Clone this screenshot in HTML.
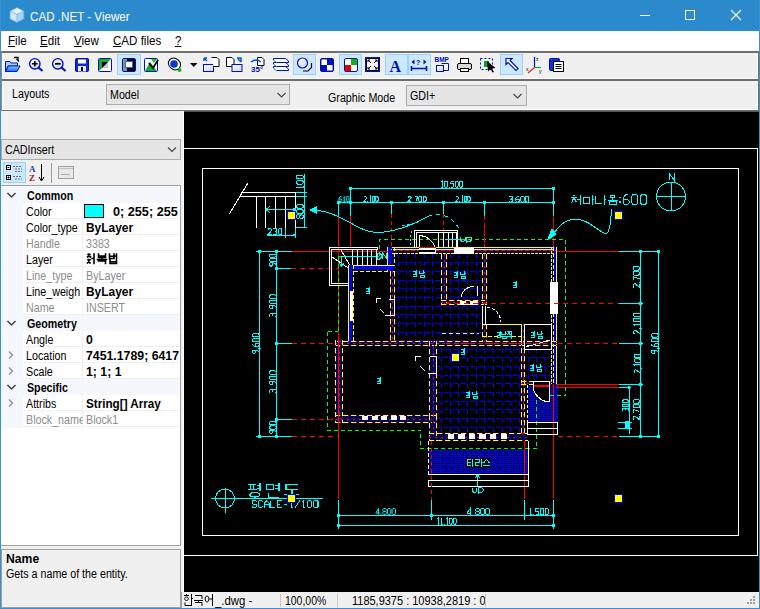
<!DOCTYPE html>
<html><head><meta charset="utf-8">
<style>
*{margin:0;padding:0;box-sizing:border-box}
html,body{width:760px;height:609px;overflow:hidden;background:#f0f0f0;font-family:"Liberation Sans",sans-serif;font-size:12px;color:#000}
.a{position:absolute}
.t{position:absolute;white-space:nowrap;transform-origin:0 0;line-height:14px}
.n{transform:scaleX(.87)}
.b{font-weight:bold}
.g{color:#8d8d8d}
svg{position:absolute;overflow:visible}
.sel{position:absolute;background:#cce8ff;border:1px solid #99d1ff}
.row{position:absolute;left:23px;width:157px;height:16px;border-bottom:1px solid #f0f0f0;background:#fff}
.row .v{position:absolute;left:59px;top:0;width:1px;height:16px;background:#f0f0f0}
.cat{position:absolute;left:1px;width:179px;height:16px;background:#f4f7fc}
</style></head><body>
<!-- title bar -->
<div class="a" style="left:0;top:0;width:760px;height:31px;background:#2b8acb"></div>
<svg style="left:0;top:0" width="40" height="31">
  <path d="M17 7.5 L24 11 L24 19 L17 22.5 L10 19 L10 11 Z" fill="#a9d3f7" stroke="#4f9fe3" stroke-width="1"/>
  <path d="M10.5 11.2 L17 14.5 L23.5 11.2 L17 8 Z" fill="#e4f2fd"/>
  <path d="M10.5 11.5 L17 14.7 L17 22 L10.5 18.8Z" fill="#cfe7fb"/>
  <path d="M10 11 L17 14.5 L24 11 M17 14.5 L17 22.5" fill="none" stroke="#6fb3ea" stroke-width="0.8"/>
</svg>
<div class="t" style="left:30px;top:10px;color:#fff;font-size:12.5px"><span style="display:inline-block;transform:scaleX(.93);transform-origin:0 0">CAD .NET - Viewer</span></div>
<svg style="left:0;top:0" width="760" height="31">
  <line x1="640" y1="15.5" x2="650" y2="15.5" stroke="#fff" stroke-width="1"/>
  <rect x="685.5" y="10.5" width="9" height="9" fill="none" stroke="#fff" stroke-width="1"/>
  <path d="M731 10 L741 20 M741 10 L731 20" stroke="#fff" stroke-width="1.1"/>
</svg>
<!-- menu -->
<div class="a" style="left:1px;top:31px;width:758px;height:20px;background:#fff"></div>
<div class="t" style="left:8px;top:34px;font-size:12.3px"><span style="display:inline-block;transform:scaleX(.94);transform-origin:0 0"><u>F</u>ile</span></div>
<div class="t" style="left:40px;top:34px;font-size:12.3px"><span style="display:inline-block;transform:scaleX(.94);transform-origin:0 0"><u>E</u>dit</span></div>
<div class="t" style="left:74px;top:34px;font-size:12.3px"><span style="display:inline-block;transform:scaleX(.94);transform-origin:0 0"><u>V</u>iew</span></div>
<div class="t" style="left:113px;top:34px;font-size:12.3px"><span style="display:inline-block;transform:scaleX(.94);transform-origin:0 0"><u>C</u>AD files</span></div>
<div class="t" style="left:175px;top:34px;font-size:12.3px"><span style="display:inline-block;transform:scaleX(.94);transform-origin:0 0"><u>?</u></span></div>
<!-- toolbar -->
<div class="a" style="left:1px;top:51px;width:758px;height:2px;background:#6e6e6e"></div>
<div class="a" style="left:757px;top:53px;width:1px;height:26px;background:#fff"></div>
<div class="a" style="left:758px;top:51px;width:1px;height:60px;background:#6e6e6e"></div>
<div class="a" style="left:1px;top:78px;width:757px;height:1px;background:#fff"></div>
<div class="a" style="left:1px;top:79px;width:758px;height:2px;background:#6e6e6e"></div>
<div class="a" style="left:757px;top:81px;width:1px;height:29px;background:#fff"></div>
<div class="a" style="left:1px;top:109px;width:757px;height:1px;background:#fff"></div>
<div class="a" style="left:1px;top:110px;width:758px;height:1px;background:#6e6e6e"></div>
<div class="a" style="left:1px;top:51px;width:1px;height:60px;background:#8a8a8a"></div>
<div class="a" style="left:2px;top:53px;width:1px;height:25px;background:#fff"></div>
<div class="a" style="left:2px;top:81px;width:1px;height:28px;background:#fff"></div>
<!-- toolbar buttons (selected) -->
<div class="sel" style="left:117px;top:54px;width:24px;height:21px"></div>
<div class="sel" style="left:293px;top:54px;width:23px;height:21px"></div>
<div class="sel" style="left:339px;top:54px;width:23px;height:21px"></div>
<div class="sel" style="left:385px;top:54px;width:23px;height:21px"></div>
<div class="sel" style="left:408px;top:54px;width:23px;height:21px"></div>
<div class="sel" style="left:500px;top:54px;width:23px;height:21px"></div>
<svg style="left:0;top:0" width="760" height="80">
<defs>
 <linearGradient id="gb" x1="0" y1="0" x2="0" y2="1"><stop offset="0" stop-color="#8ec9ff"/><stop offset="1" stop-color="#0a6ee8"/></linearGradient>
 <linearGradient id="gw" x1="0" y1="0" x2="1" y2="1"><stop offset="0" stop-color="#fff"/><stop offset="1" stop-color="#c8d4f0"/></linearGradient>
</defs>
<!-- 1 open folder -->
<path d="M5.5 61.5 L10 61.5 L11 63 L17.5 63 L17.5 66 L8 66 L5.5 71.5 Z" fill="#9cd0ff" stroke="#0018c8" stroke-width="1"/>
<path d="M5.5 71.5 L8.5 66 L20 66 L17 71.5 Z" fill="url(#gb)" stroke="#0018c8" stroke-width="1"/>
<path d="M14 57.5 L18 57.5 L18 60.5 M16.5 59 L19 61.5" stroke="#000" stroke-width="1.3" fill="none"/>
<!-- 2 zoom in -->
<circle cx="34.8" cy="63.8" r="5.2" fill="url(#gw)" stroke="#0010c0" stroke-width="1.4"/>
<path d="M38.5 67.5 L42.5 71" stroke="#0010c0" stroke-width="2.2"/>
<path d="M32 63.8 H37.6 M34.8 61 V66.6" stroke="#000" stroke-width="1.6"/>
<!-- 3 zoom out -->
<circle cx="57.8" cy="63.8" r="5.2" fill="url(#gw)" stroke="#0010c0" stroke-width="1.4"/>
<path d="M61.5 67.5 L65.5 71" stroke="#0010c0" stroke-width="2.2"/>
<path d="M55 63.8 H60.6" stroke="#000" stroke-width="1.8"/>
<!-- 4 save -->
<rect x="75.5" y="58.5" width="13" height="13" rx="1" fill="#1028d8" stroke="#0010a0"/>
<rect x="78" y="59.5" width="8" height="4" fill="#fff"/>
<rect x="78" y="66" width="8" height="5.5" fill="#e6eaf4"/>
<rect x="81" y="67" width="2" height="4" fill="#000"/>
<!-- 5 zoom extents -->
<rect x="98.5" y="58.5" width="13" height="13" rx="1" fill="#fff" stroke="#0010b8"/>
<path d="M99 59 L111 59 L99 71 Z" fill="#10b020"/>
<rect x="102" y="62" width="6" height="6" fill="#b8c8e8"/>
<path d="M102 62 L108 62 L102 68Z" fill="#000"/>
<!-- 6 selected icon -->
<rect x="122.5" y="58.5" width="13" height="13" rx="1.5" fill="#000" stroke="#0010b0"/>
<rect x="123" y="59" width="4" height="12" fill="#909090"/>
<rect x="125.5" y="61.5" width="7" height="6" fill="#fff" stroke="#2060ff"/>
<!-- 7 green check -->
<rect x="144.5" y="58.5" width="13" height="13" rx="1" fill="#fff" stroke="#0010c0"/>
<path d="M145 71 L150 62 L157 71 Z" fill="#10b020"/>
<path d="M149 63 L153 68 L158 60" stroke="#000" stroke-width="1.8" fill="none"/>
<path d="M151 59 L157 59 L154 63Z" fill="#20c030"/>
<!-- 8 globe -->
<ellipse cx="174.5" cy="64" rx="6.5" ry="5.5" transform="rotate(40 174.5 64)" fill="none" stroke="#000" stroke-width="1"/>
<circle cx="174" cy="64" r="3.8" fill="#1038d0"/>
<circle cx="179.5" cy="70" r="2" fill="#18b020"/>
<!-- 9 dropdown arrow -->
<path d="M190 63 L197.5 63 L193.75 67 Z" fill="#000"/>
<!-- 10 -->
<rect x="203.5" y="64.5" width="10" height="7" fill="url(#gw)" stroke="#0010c0"/>
<path d="M211.5 57.5 H217 L219 59.5 V66.5 H213.5" fill="#fff" stroke="#000"/>
<path d="M204 58 L207 61 M204 58 H207 M204 58 V61" stroke="#0050e0" stroke-width="1.4" fill="none"/>
<!-- 11 -->
<path d="M226.5 57.5 H232 L234 59.5 V66.5 H226.5Z" fill="#fff" stroke="#000"/>
<rect x="232" y="64.5" width="10" height="7" fill="url(#gw)" stroke="#0010c0"/>
<path d="M237 58 H241 V62 M238 59 L241 62" stroke="#0050e0" stroke-width="1.4" fill="none"/>
<!-- 12 35 -->
<path d="M257.5 57.5 H262 L264 59.5 V65.5 H257.5Z" fill="#fff" stroke="#000"/>
<path d="M251 62 Q256 58 261 62" stroke="#0050e0" stroke-width="1.4" fill="none"/>
<text x="251" y="71.5" font-size="8" font-weight="bold" fill="#0010a0" font-family="Liberation Sans">35°</text>
<!-- 13 layers -->
<path d="M273.5 66.5 L285.5 66.5 L288.5 69 L288.5 70.5 L276.5 70.5 L273.5 68 Z" fill="#fff" stroke="#0010c0" stroke-width="1"/>
<path d="M273.5 62.5 L285.5 62.5 L288.5 65 L288.5 66.5 L276.5 66.5 L273.5 64 Z" fill="#fff" stroke="#0010c0" stroke-width="1"/>
<path d="M273.5 58.5 L285.5 58.5 L288.5 61 L288.5 62.5 L276.5 62.5 L273.5 60 Z" fill="#fff" stroke="#0010c0" stroke-width="1"/>
<path d="M274 60 L276.5 62.5 M274 64 L276.5 66.5 M274 68 L276.5 70.5" stroke="#30c0ff" stroke-width="1"/>
<!-- 14 circle -->
<circle cx="302.5" cy="63" r="5" fill="url(#gw)" stroke="#0010c0" stroke-width="1.2"/>
<path d="M311.5 63 V67.5 L308 71 H303" stroke="#000" stroke-width="1.2" fill="none"/>
<!-- 15 checker -->
<rect x="320.5" y="58.5" width="13" height="13" rx="1.5" fill="#0010c0" stroke="#0010a0"/>
<rect x="321.5" y="59.5" width="5.5" height="5.5" fill="#fff"/>
<rect x="327" y="65" width="5.5" height="5.5" fill="#fff"/>
<!-- 16 rgb -->
<rect x="344.5" y="58.5" width="13" height="13" rx="1.5" fill="#fff" stroke="#0010b0"/>
<rect x="351" y="59" width="6" height="6" fill="#10b020"/>
<rect x="345" y="65" width="6" height="6" fill="#e00000"/>
<!-- 17 fullscreen -->
<rect x="365.5" y="57.5" width="14" height="14" fill="#fff" stroke="#0010c0"/>
<rect x="366.5" y="58.5" width="12" height="12" fill="#f2f2f2" stroke="#000"/>
<path d="M368 60 L371 63 M368 60 V62 M368 60 H370 M377 60 L374 63 M377 60 V62 M377 60 H375 M368 69 L371 66 M368 69 V67 M368 69 H370 M377 69 L374 66 M377 69 V67 M377 69 H375" stroke="#000" stroke-width="1"/>
<!-- 18 A -->
<text x="389.5" y="71.5" font-size="16" font-weight="bold" fill="#0010b0" font-family="Liberation Serif">A</text>
<!-- 19 dim -->
<path d="M411.5 68.5 H426.5 M411.5 66 V71 M426.5 66 V71" stroke="#0010b0" stroke-width="1.6"/>
<path d="M411.5 62 L414.5 59.5 V64.5Z M426.5 62 L423.5 59.5 V64.5Z" fill="#0010b0"/>
<text x="416" y="65" font-size="7" font-weight="bold" fill="#0010b0" font-family="Liberation Sans">?</text>
<!-- 20 BMP -->
<text x="434.5" y="62" font-size="6.5" font-weight="bold" fill="#0010c0" font-family="Liberation Sans">BMP</text>
<rect x="436.5" y="65.5" width="7" height="6" fill="url(#gw)" stroke="#0010c0"/>
<path d="M441.5 63.5 H448.5 V70.5 H444" stroke="#0010c0" fill="none"/>
<!-- 21 printer -->
<rect x="457.5" y="63.5" width="14" height="6" rx="1.5" fill="#d8d8d8" stroke="#000"/>
<rect x="460.5" y="58.5" width="8" height="5" fill="#fff" stroke="#000"/>
<rect x="460.5" y="68.5" width="8" height="3" fill="#fff" stroke="#000"/>
<!-- 22 select window -->
<path d="M480.5 58.5 H492.5 V69.5 H480.5 Z" fill="none" stroke="#0010c0" stroke-dasharray="2 2"/>
<rect x="484" y="61" width="5" height="6" fill="#10a020"/>
<path d="M487 61 L495.5 68 L492 68.5 L494 72 L492.5 72.5 L490.5 69 L488 71.5Z" fill="#000"/>
<!-- 23 arrow -->
<path d="M506 58.5 H512 L510 60.5 L518 68.5 L516 70.5 L508 62.5 L506 64.5 Z" fill="#fff" stroke="#0010c0" stroke-width="1.2"/>
<!-- 24 axes -->
<path d="M534.5 57 V67.5" stroke="#0010c0" stroke-width="1.2"/>
<path d="M534.5 67.5 H541" stroke="#10b020" stroke-width="1.2"/>
<path d="M534.5 67.5 L528 73" stroke="#e02020" stroke-width="1.2"/>
<text x="536" y="61" font-size="5" fill="#000" font-family="Liberation Sans">z</text>
<text x="526" y="71" font-size="5" fill="#000" font-family="Liberation Sans">x</text>
<text x="539" y="73" font-size="5" fill="#000" font-family="Liberation Sans">y</text>
<!-- 25 clipboard -->
<rect x="549.5" y="58.5" width="10" height="12" rx="1" fill="#1030d8" stroke="#0010a0"/>
<rect x="553.5" y="61.5" width="10" height="10" fill="#fff" stroke="#000"/>
<path d="M555.5 64.5 H561.5 M555.5 66.5 H561.5 M555.5 68.5 H561.5" stroke="#000"/>
</svg>
<!-- layouts bar -->
<div class="t n" style="left:12px;top:87px;font-size:12.3px">Layouts</div>
<div class="a" style="left:106px;top:84px;width:184px;height:21px;background:#e5e5e5;border:1px solid #adadad"></div>
<div class="t n" style="left:110px;top:88px;font-size:12.3px">Model</div>
<div class="t n" style="left:328px;top:91px;font-size:12.3px">Graphic Mode</div>
<div class="a" style="left:406px;top:85px;width:121px;height:21px;background:#e5e5e5;border:1px solid #adadad"></div>
<div class="t n" style="left:410px;top:89px;font-size:12.3px">GDI+</div>
<svg style="left:0;top:0" width="760" height="200">
 <path d="M277.5 93 L281.5 97 L285.5 93" stroke="#444" stroke-width="1.1" fill="none"/>
 <path d="M513.5 94 L517.5 98 L521.5 94" stroke="#444" stroke-width="1.1" fill="none"/>
</svg>
<!-- left splitter -->
<div class="a" style="left:183px;top:111px;width:1px;height:481px;background:#fff"></div>
<!-- CADInsert combo -->
<div class="a" style="left:1px;top:139px;width:180px;height:21px;background:#e5e5e5;border:1px solid #adadad"></div>
<div class="t n" style="left:5px;top:143px;font-size:12.3px">CADInsert</div>
<!-- pg toolbar -->
<div class="sel" style="left:3px;top:162px;width:23px;height:21px"></div>
<div class="a" style="left:51px;top:163px;width:1px;height:20px;background:#9a9a9a"></div>
<svg style="left:0;top:0" width="200" height="200">
 <path d="M168 147.5 L172 151.5 L176 147.5" stroke="#444" stroke-width="1.1" fill="none"/>
 <rect x="6.5" y="165.5" width="4" height="4" fill="#fff" stroke="#000"/>
 <rect x="6.5" y="175.5" width="4" height="4" fill="#fff" stroke="#000"/>
 <path d="M7.5 167.5 H9.5 M7.5 177.5 H9.5 M8.5 176.5 V178.5" stroke="#000"/>
 <path d="M13 166.5 H22 M15 169 H22 M15 171.5 H22 M13 176.5 H22 M15 179 H22" stroke="#6a6a8a" stroke-width="1" stroke-dasharray="2 1"/>
 <text x="29" y="172" font-size="9" font-weight="bold" fill="#2040b0" font-family="Liberation Serif">A</text>
 <text x="29" y="181" font-size="9" font-weight="bold" fill="#a02020" font-family="Liberation Serif">Z</text>
 <path d="M41.5 164 V180 M39 177 L41.5 181 L44 177" stroke="#000" stroke-width="1" fill="none"/>
 <rect x="58.5" y="166.5" width="15" height="12" fill="#e8e8e8" stroke="#a0a0a0"/>
 <path d="M59 168.5 H73" stroke="#c0c0c0"/>
 <path d="M61 174.5 H70" stroke="#b0b0b0"/>
</svg>
<!-- property grid -->
<div class="a" style="left:0px;top:185px;width:181px;height:361px;background:#fff;border:1px solid #a0a0a0"></div>
<div class="a" style="left:1px;top:186px;width:22px;height:242px;background:#f4f7fc"></div>
<div class="cat" style="top:187px"></div>
<div class="t b" style="left:27px;top:189px;font-size:12px"><span style="display:inline-block;transform:scaleX(.89);transform-origin:0 0">Common</span></div>
<svg style="left:0;top:187px" width="20" height="16"><path d="M7.5 6 L11.5 10 L15.5 6" stroke="#404040" stroke-width="1.5" fill="none"/></svg>
<div class="row" style="top:203px"><div class="v"></div></div>
<div class="t n " style="left:26px;top:205px;font-size:12.3px;width:65px;overflow:hidden">Color</div>
<div class="a" style="left:84px;top:204px;width:20px;height:14px;background:#0ff;border:1px solid #000"></div>
<div class="t b" style="left:113px;top:205px;font-size:12.3px;width:67px;overflow:hidden"><span style="display:inline-block;transform:scaleX(1.03);transform-origin:0 0">0; 255; 255</span></div>
<div class="row" style="top:219px"><div class="v"></div></div>
<div class="t n " style="left:26px;top:221px;font-size:12.3px;width:65px;overflow:hidden">Color_type</div>
<div class="t b" style="left:86px;top:221px;font-size:12.3px;width:94px;overflow:hidden"><span style="display:inline-block;transform:scaleX(.97);transform-origin:0 0">ByLayer</span></div>
<div class="row" style="top:235px"><div class="v"></div></div>
<div class="t n g" style="left:26px;top:237px;font-size:12.3px;width:65px;overflow:hidden">Handle</div>
<div class="t g" style="left:86px;top:237px;font-size:12.3px;width:94px;overflow:hidden"><span style="display:inline-block;transform:scaleX(.87);transform-origin:0 0">3383</span></div>
<div class="row" style="top:251px"><div class="v"></div></div>
<div class="t n " style="left:26px;top:253px;font-size:12.3px;width:65px;overflow:hidden">Layer</div>
<svg style="left:86px;top:251px" width="40" height="16"><g stroke="#000" stroke-width="1.6" fill="none" stroke-linecap="square">
<path d="M2 3.5 H4 M3 3 V4.5 M1.5 6 L3 5 L4.5 6 M2 8.5 L4 12 M4 8.5 L1.5 12 M8 3 V12.5 M6 7.5 H8"/>
<path d="M12.5 3 V6.5 H19.5 V3 M12.5 5 H19.5 M16 6.5 V8 M11.5 8.5 H20.5 M12.5 10 H19.5 V12.5"/>
<path d="M23.5 3 V7.5 H28 V3 M23.5 5.2 H28 M28 5 H30 M30.5 3 V8 M24 9 V12.5 H30.5 V9 M24 10.7 H30.5"/>
</g></svg>
<div class="row" style="top:267px"><div class="v"></div></div>
<div class="t n g" style="left:26px;top:269px;font-size:12.3px;width:65px;overflow:hidden">Line_type</div>
<div class="t g" style="left:86px;top:269px;font-size:12.3px;width:94px;overflow:hidden"><span style="display:inline-block;transform:scaleX(.87);transform-origin:0 0">ByLayer</span></div>
<div class="row" style="top:283px"><div class="v"></div></div>
<div class="t n " style="left:26px;top:285px;font-size:12.3px;width:65px;overflow:hidden">Line_weigh</div>
<div class="t b" style="left:86px;top:285px;font-size:12.3px;width:94px;overflow:hidden"><span style="display:inline-block;transform:scaleX(.97);transform-origin:0 0">ByLayer</span></div>
<div class="row" style="top:299px"><div class="v"></div></div>
<div class="t n g" style="left:26px;top:301px;font-size:12.3px;width:65px;overflow:hidden">Name</div>
<div class="t g" style="left:86px;top:301px;font-size:12.3px;width:94px;overflow:hidden"><span style="display:inline-block;transform:scaleX(.87);transform-origin:0 0">INSERT</span></div>
<div class="cat" style="top:315px"></div>
<div class="t b" style="left:27px;top:317px;font-size:12px"><span style="display:inline-block;transform:scaleX(.89);transform-origin:0 0">Geometry</span></div>
<svg style="left:0;top:315px" width="20" height="16"><path d="M7.5 6 L11.5 10 L15.5 6" stroke="#404040" stroke-width="1.5" fill="none"/></svg>
<div class="row" style="top:331px"><div class="v"></div></div>
<div class="t n " style="left:26px;top:333px;font-size:12.3px;width:65px;overflow:hidden">Angle</div>
<div class="t b" style="left:86px;top:333px;font-size:12.3px;width:94px;overflow:hidden"><span style="display:inline-block;transform:scaleX(1.0);transform-origin:0 0">0</span></div>
<div class="row" style="top:347px"><div class="v"></div></div>
<div class="t n " style="left:26px;top:349px;font-size:12.3px;width:65px;overflow:hidden">Location</div>
<svg style="left:0;top:347px" width="20" height="16"><path d="M9 4.5 L12.5 8 L9 11.5" stroke="#909090" stroke-width="1.3" fill="none"/></svg>
<div class="t b" style="left:86px;top:349px;font-size:12.3px;width:94px;overflow:hidden"><span style="display:inline-block;transform:scaleX(1.0);transform-origin:0 0">7451.1789; 6417</span></div>
<div class="row" style="top:363px"><div class="v"></div></div>
<div class="t n " style="left:26px;top:365px;font-size:12.3px;width:65px;overflow:hidden">Scale</div>
<svg style="left:0;top:363px" width="20" height="16"><path d="M9 4.5 L12.5 8 L9 11.5" stroke="#909090" stroke-width="1.3" fill="none"/></svg>
<div class="t b" style="left:86px;top:365px;font-size:12.3px;width:94px;overflow:hidden"><span style="display:inline-block;transform:scaleX(1.0);transform-origin:0 0">1; 1; 1</span></div>
<div class="cat" style="top:379px"></div>
<div class="t b" style="left:27px;top:381px;font-size:12px"><span style="display:inline-block;transform:scaleX(.89);transform-origin:0 0">Specific</span></div>
<svg style="left:0;top:379px" width="20" height="16"><path d="M7.5 6 L11.5 10 L15.5 6" stroke="#404040" stroke-width="1.5" fill="none"/></svg>
<div class="row" style="top:395px"><div class="v"></div></div>
<div class="t n " style="left:26px;top:397px;font-size:12.3px;width:65px;overflow:hidden">Attribs</div>
<svg style="left:0;top:395px" width="20" height="16"><path d="M9 4.5 L12.5 8 L9 11.5" stroke="#909090" stroke-width="1.3" fill="none"/></svg>
<div class="t b" style="left:86px;top:397px;font-size:12.3px;width:94px;overflow:hidden"><span style="display:inline-block;transform:scaleX(.95);transform-origin:0 0">String[] Array</span></div>
<div class="row" style="top:411px"><div class="v"></div></div>
<div class="t n g" style="left:26px;top:413px;font-size:12.3px;width:65px;overflow:hidden">Block_name</div>
<div class="t g" style="left:86px;top:413px;font-size:12.3px;width:94px;overflow:hidden"><span style="display:inline-block;transform:scaleX(.87);transform-origin:0 0">Block1</span></div>
<!-- canvas -->
<div class="a" style="left:184px;top:111px;width:575px;height:481px;background:#000;border-top:1px solid #555"></div>
<svg style="left:0;top:0" width="760" height="609">
<defs>
<clipPath id="cv"><rect x="184" y="112" width="575" height="480"/></clipPath>
<pattern id="tile" patternUnits="userSpaceOnUse" x="394.05" y="257.95" width="17.2" height="17.2">
 <path d="M4.3 1 V4.3 M1.3 4.3 H7.3 M15.899999999999999 1.5 H12.899999999999999 V7.1 H15.899999999999999 M4.3 9.9 V15.899999999999999 M1.3 12.899999999999999 H7.3 M9.9 10.1 H12.899999999999999 V15.7 H9.9" stroke="#0000ff" stroke-width="1" fill="none" shape-rendering="crispEdges"/>
</pattern>
<pattern id="brick" patternUnits="userSpaceOnUse" x="0" y="0" width="6" height="4">
 <rect width="6" height="4" fill="#0000ff"/>
 <rect x="0" y="1" width="5" height="1" fill="#000"/>
 <rect x="3" y="3" width="3" height="1" fill="#000"/><rect x="0" y="3" width="2" height="1" fill="#000"/>
</pattern>
<pattern id="hatch" patternUnits="userSpaceOnUse" x="0" y="0" width="3" height="3">
 <rect x="0" y="2" width="1" height="1" fill="#0000ff"/><rect x="1" y="1" width="1" height="1" fill="#0000ff"/><rect x="2" y="0" width="1" height="1" fill="#0000ff"/>
</pattern>
<pattern id="wallp" patternUnits="userSpaceOnUse" x="0" y="0" width="3" height="3">
 <rect width="3" height="3" fill="#0000ff"/>
 <rect x="0" y="0" width="1" height="1" fill="#000"/><rect x="1.5" y="1.5" width="1" height="1" fill="#000"/>
</pattern>
</defs>
<g clip-path="url(#cv)" shape-rendering="crispEdges">
<path d="M150 148.5 H757.5 V555.5 H150" stroke="#ffffff" stroke-width="1" fill="none"/>
<rect x="202.5" y="168.5" width="536" height="367" fill="none" stroke="#ffffff" stroke-width="1"/>
<path d="M394 262.5 H442 M394 271.5 H442 M394 280.5 H442 M394 288.5 H442 M394 297.5 H442 M394 306.5 H442 M394 314.5 H442 M394 323.5 H442 M394 332.5 H442 M394 340.5 H442" stroke="#0000ff" stroke-width="1" fill="none" stroke-dasharray="5 3.7" stroke-dashoffset="2.40"/>
<path d="M398.5 254 V341 M406.5 254 V341 M415.5 254 V341 M424.5 254 V341 M432.5 254 V341 M441.5 254 V341" stroke="#0000ff" stroke-width="1" fill="none" stroke-dasharray="5 3.7" stroke-dashoffset="1.40"/>
<path d="M446 262.5 H482 M446 271.5 H482 M446 280.5 H482 M446 288.5 H482 M446 297.5 H482" stroke="#0000ff" stroke-width="1" fill="none" stroke-dasharray="5 3.7" stroke-dashoffset="2.20"/>
<path d="M450.5 254 V301 M458.5 254 V301 M467.5 254 V301 M476.5 254 V301" stroke="#0000ff" stroke-width="1" fill="none" stroke-dasharray="5 3.7" stroke-dashoffset="1.40"/>
<path d="M442 306.5 H482 M442 314.5 H482 M442 323.5 H482 M442 332.5 H482 M442 340.5 H482" stroke="#0000ff" stroke-width="1" fill="none" stroke-dasharray="5 3.7" stroke-dashoffset="6.90"/>
<path d="M450.5 304 V341 M458.5 304 V341 M467.5 304 V341 M476.5 304 V341" stroke="#0000ff" stroke-width="1" fill="none" stroke-dasharray="5 3.7" stroke-dashoffset="7.90"/>
<path d="M436 349.5 H523 M436 357.5 H523 M436 366.5 H523 M436 375.5 H523 M436 383.5 H523 M436 392.5 H523 M436 401.5 H523 M436 409.5 H523 M436 418.5 H523 M436 427.5 H523" stroke="#0000ff" stroke-width="1" fill="none" stroke-dasharray="5 3.7" stroke-dashoffset="0.90"/>
<path d="M441.5 345 V433 M450.5 345 V433 M458.5 345 V433 M467.5 345 V433 M476.5 345 V433 M484.5 345 V433 M493.5 345 V433 M502.5 345 V433 M510.5 345 V433 M519.5 345 V433" stroke="#0000ff" stroke-width="1" fill="none" stroke-dasharray="5 3.7" stroke-dashoffset="5.40"/>
<path d="M523 357.5 H552 M523 366.5 H552 M523 375.5 H552" stroke="#0000ff" stroke-width="1" fill="none" stroke-dasharray="5 3.7" stroke-dashoffset="0.90"/>
<path d="M528.5 349 V382 M536.5 349 V382 M545.5 349 V382" stroke="#0000ff" stroke-width="1" fill="none" stroke-dasharray="5 3.7" stroke-dashoffset="0.70"/>
<rect x="428.5" y="448.5" width="100" height="26" fill="url(#brick)" stroke="none" stroke-width="1"/>
<rect x="527.5" y="385" width="30" height="37" fill="url(#brick)" stroke="none" stroke-width="1"/>
<rect x="387" y="250.0" width="170" height="3.0" fill="url(#hatch)" stroke="none" stroke-width="1"/>
<line x1="387" y1="247.5" x2="557" y2="247.5" stroke="#ffff00" stroke-width="1"/>
<line x1="387" y1="248.5" x2="557" y2="248.5" stroke="#0000ff" stroke-width="1" stroke-dasharray="1 1"/>
<line x1="387" y1="249.5" x2="557" y2="249.5" stroke="#ffff00" stroke-width="1"/>
<line x1="387" y1="250.5" x2="557" y2="250.5" stroke="#ff0000" stroke-width="1" stroke-dasharray="4 2"/>
<line x1="387" y1="253.5" x2="557" y2="253.5" stroke="#ffff00" stroke-width="1" stroke-dasharray="3 1"/>
<rect x="388" y="247" width="6" height="24" fill="url(#hatch)" stroke="none" stroke-width="1"/>
<rect x="388" y="247" width="3" height="24" fill="#0000ff" stroke="none" stroke-width="1"/>
<line x1="387.5" y1="247" x2="387.5" y2="271" stroke="#ffff00" stroke-width="1"/>
<line x1="394.5" y1="247" x2="394.5" y2="271" stroke="#ffff00" stroke-width="1" stroke-dasharray="4 2"/>
<rect x="348" y="266" width="47" height="5" fill="url(#hatch)" stroke="none" stroke-width="1"/>
<rect x="348" y="266" width="47" height="3" fill="#0000ff" stroke="none" stroke-width="1"/>
<line x1="348" y1="265.5" x2="395" y2="265.5" stroke="#ffff00" stroke-width="1"/>
<line x1="348" y1="271.5" x2="395" y2="271.5" stroke="#ffff00" stroke-width="1" stroke-dasharray="4 2"/>
<rect x="349" y="265" width="4" height="77" fill="url(#hatch)" stroke="none" stroke-width="1"/>
<rect x="349" y="265" width="3" height="77" fill="#0000ff" stroke="none" stroke-width="1"/>
<line x1="348.5" y1="265" x2="348.5" y2="342" stroke="#ffff00" stroke-width="1"/>
<line x1="353.5" y1="265" x2="353.5" y2="342" stroke="#ffff00" stroke-width="1" stroke-dasharray="4 2"/>
<rect x="551.0" y="247" width="2.0" height="137" fill="url(#hatch)" stroke="none" stroke-width="1"/>
<line x1="556.5" y1="247" x2="556.5" y2="384" stroke="#ffff00" stroke-width="1"/>
<line x1="555.5" y1="247" x2="555.5" y2="384" stroke="#0000ff" stroke-width="1" stroke-dasharray="1 1"/>
<line x1="554.5" y1="247" x2="554.5" y2="384" stroke="#0000ff" stroke-width="1"/>
<line x1="553.5" y1="247" x2="553.5" y2="384" stroke="#ffff00" stroke-width="1" stroke-dasharray="4 2"/>
<line x1="551.5" y1="247" x2="551.5" y2="384" stroke="#ffff00" stroke-width="1" stroke-dasharray="3 1"/>
<rect x="335" y="342" width="222" height="3" fill="url(#hatch)" stroke="none" stroke-width="1"/>
<line x1="335" y1="341.5" x2="557" y2="341.5" stroke="#ff0000" stroke-width="1" stroke-dasharray="3 5" stroke-dashoffset="5"/>
<line x1="335" y1="345.5" x2="557" y2="345.5" stroke="#ff0000" stroke-width="1" stroke-dasharray="3 5" stroke-dashoffset="5"/>
<line x1="335" y1="341.5" x2="557" y2="341.5" stroke="#ffff00" stroke-width="1" stroke-dasharray="5 3"/>
<line x1="335" y1="345.5" x2="557" y2="345.5" stroke="#ffff00" stroke-width="1" stroke-dasharray="5 3"/>
<line x1="335" y1="343.5" x2="557" y2="343.5" stroke="#ff0000" stroke-width="1" stroke-dasharray="2 4"/>
<rect x="336" y="340" width="6" height="83" fill="url(#hatch)" stroke="none" stroke-width="1"/>
<line x1="335.5" y1="340" x2="335.5" y2="423" stroke="#ff0000" stroke-width="1" stroke-dasharray="3 5" stroke-dashoffset="5"/>
<line x1="342.5" y1="340" x2="342.5" y2="423" stroke="#ff0000" stroke-width="1" stroke-dasharray="3 5" stroke-dashoffset="5"/>
<line x1="335.5" y1="340" x2="335.5" y2="423" stroke="#ffff00" stroke-width="1" stroke-dasharray="5 3"/>
<line x1="342.5" y1="340" x2="342.5" y2="423" stroke="#ffff00" stroke-width="1" stroke-dasharray="5 3"/>
<line x1="339.0" y1="340" x2="339.0" y2="423" stroke="#ff0000" stroke-width="1" stroke-dasharray="2 4"/>
<rect x="335" y="416" width="102" height="6" fill="url(#hatch)" stroke="none" stroke-width="1"/>
<line x1="335" y1="415.5" x2="437" y2="415.5" stroke="#ff0000" stroke-width="1" stroke-dasharray="3 5" stroke-dashoffset="5"/>
<line x1="335" y1="422.5" x2="437" y2="422.5" stroke="#ff0000" stroke-width="1" stroke-dasharray="3 5" stroke-dashoffset="5"/>
<line x1="335" y1="415.5" x2="437" y2="415.5" stroke="#ffff00" stroke-width="1" stroke-dasharray="5 3"/>
<line x1="335" y1="422.5" x2="437" y2="422.5" stroke="#ffff00" stroke-width="1" stroke-dasharray="5 3"/>
<line x1="335" y1="419.0" x2="437" y2="419.0" stroke="#ff0000" stroke-width="1" stroke-dasharray="2 4"/>
<rect x="430" y="341" width="6" height="74" fill="url(#hatch)" stroke="none" stroke-width="1"/>
<line x1="429.5" y1="341" x2="429.5" y2="415" stroke="#ff0000" stroke-width="1" stroke-dasharray="3 5" stroke-dashoffset="5"/>
<line x1="436.5" y1="341" x2="436.5" y2="415" stroke="#ff0000" stroke-width="1" stroke-dasharray="3 5" stroke-dashoffset="5"/>
<line x1="429.5" y1="341" x2="429.5" y2="415" stroke="#ffff00" stroke-width="1" stroke-dasharray="5 3"/>
<line x1="436.5" y1="341" x2="436.5" y2="415" stroke="#ffff00" stroke-width="1" stroke-dasharray="5 3"/>
<line x1="433.0" y1="341" x2="433.0" y2="415" stroke="#ff0000" stroke-width="1" stroke-dasharray="2 4"/>
<rect x="430" y="415" width="6" height="26" fill="url(#hatch)" stroke="none" stroke-width="1"/>
<line x1="429.5" y1="415" x2="429.5" y2="441" stroke="#ff0000" stroke-width="1" stroke-dasharray="3 5" stroke-dashoffset="5"/>
<line x1="436.5" y1="415" x2="436.5" y2="441" stroke="#ff0000" stroke-width="1" stroke-dasharray="3 5" stroke-dashoffset="5"/>
<line x1="429.5" y1="415" x2="429.5" y2="441" stroke="#ffff00" stroke-width="1" stroke-dasharray="5 3"/>
<line x1="436.5" y1="415" x2="436.5" y2="441" stroke="#ffff00" stroke-width="1" stroke-dasharray="5 3"/>
<line x1="433.0" y1="415" x2="433.0" y2="441" stroke="#ff0000" stroke-width="1" stroke-dasharray="2 4"/>
<rect x="429" y="434" width="99" height="6" fill="url(#hatch)" stroke="none" stroke-width="1"/>
<line x1="429" y1="433.5" x2="528" y2="433.5" stroke="#ff0000" stroke-width="1" stroke-dasharray="3 5" stroke-dashoffset="5"/>
<line x1="429" y1="440.5" x2="528" y2="440.5" stroke="#ff0000" stroke-width="1" stroke-dasharray="3 5" stroke-dashoffset="5"/>
<line x1="429" y1="433.5" x2="528" y2="433.5" stroke="#ffff00" stroke-width="1" stroke-dasharray="5 3"/>
<line x1="429" y1="440.5" x2="528" y2="440.5" stroke="#ffff00" stroke-width="1" stroke-dasharray="5 3"/>
<line x1="429" y1="437.0" x2="528" y2="437.0" stroke="#ff0000" stroke-width="1" stroke-dasharray="2 4"/>
<rect x="391" y="271" width="3" height="70" fill="url(#hatch)" stroke="none" stroke-width="1"/>
<line x1="390.5" y1="271" x2="390.5" y2="341" stroke="#ff0000" stroke-width="1" stroke-dasharray="3 5" stroke-dashoffset="5"/>
<line x1="394.5" y1="271" x2="394.5" y2="341" stroke="#ff0000" stroke-width="1" stroke-dasharray="3 5" stroke-dashoffset="5"/>
<line x1="390.5" y1="271" x2="390.5" y2="341" stroke="#ffff00" stroke-width="1" stroke-dasharray="5 3"/>
<line x1="394.5" y1="271" x2="394.5" y2="341" stroke="#ffff00" stroke-width="1" stroke-dasharray="5 3"/>
<line x1="392.5" y1="271" x2="392.5" y2="341" stroke="#ff0000" stroke-width="1" stroke-dasharray="2 4"/>
<rect x="442" y="254" width="4" height="51" fill="url(#hatch)" stroke="none" stroke-width="1"/>
<line x1="441.5" y1="254" x2="441.5" y2="305" stroke="#ff0000" stroke-width="1" stroke-dasharray="3 5" stroke-dashoffset="5"/>
<line x1="446.5" y1="254" x2="446.5" y2="305" stroke="#ff0000" stroke-width="1" stroke-dasharray="3 5" stroke-dashoffset="5"/>
<line x1="441.5" y1="254" x2="441.5" y2="305" stroke="#ffff00" stroke-width="1" stroke-dasharray="5 3"/>
<line x1="446.5" y1="254" x2="446.5" y2="305" stroke="#ffff00" stroke-width="1" stroke-dasharray="5 3"/>
<line x1="444.0" y1="254" x2="444.0" y2="305" stroke="#ff0000" stroke-width="1" stroke-dasharray="2 4"/>
<rect x="441" y="301" width="46" height="3" fill="url(#hatch)" stroke="none" stroke-width="1"/>
<line x1="441" y1="300.5" x2="487" y2="300.5" stroke="#ff0000" stroke-width="1" stroke-dasharray="3 5" stroke-dashoffset="5"/>
<line x1="441" y1="304.5" x2="487" y2="304.5" stroke="#ff0000" stroke-width="1" stroke-dasharray="3 5" stroke-dashoffset="5"/>
<line x1="441" y1="300.5" x2="487" y2="300.5" stroke="#ffff00" stroke-width="1" stroke-dasharray="5 3"/>
<line x1="441" y1="304.5" x2="487" y2="304.5" stroke="#ffff00" stroke-width="1" stroke-dasharray="5 3"/>
<line x1="441" y1="302.5" x2="487" y2="302.5" stroke="#ff0000" stroke-width="1" stroke-dasharray="2 4"/>
<rect x="483" y="254" width="3" height="51" fill="url(#hatch)" stroke="none" stroke-width="1"/>
<line x1="482.5" y1="254" x2="482.5" y2="305" stroke="#ff0000" stroke-width="1" stroke-dasharray="3 5" stroke-dashoffset="5"/>
<line x1="486.5" y1="254" x2="486.5" y2="305" stroke="#ff0000" stroke-width="1" stroke-dasharray="3 5" stroke-dashoffset="5"/>
<line x1="482.5" y1="254" x2="482.5" y2="305" stroke="#ffff00" stroke-width="1" stroke-dasharray="5 3"/>
<line x1="486.5" y1="254" x2="486.5" y2="305" stroke="#ffff00" stroke-width="1" stroke-dasharray="5 3"/>
<line x1="484.5" y1="254" x2="484.5" y2="305" stroke="#ff0000" stroke-width="1" stroke-dasharray="2 4"/>
<rect x="483" y="324" width="3" height="18" fill="url(#hatch)" stroke="none" stroke-width="1"/>
<line x1="482.5" y1="324" x2="482.5" y2="342" stroke="#ff0000" stroke-width="1" stroke-dasharray="3 5" stroke-dashoffset="5"/>
<line x1="486.5" y1="324" x2="486.5" y2="342" stroke="#ff0000" stroke-width="1" stroke-dasharray="3 5" stroke-dashoffset="5"/>
<line x1="482.5" y1="324" x2="482.5" y2="342" stroke="#ffff00" stroke-width="1" stroke-dasharray="5 3"/>
<line x1="486.5" y1="324" x2="486.5" y2="342" stroke="#ffff00" stroke-width="1" stroke-dasharray="5 3"/>
<line x1="484.5" y1="324" x2="484.5" y2="342" stroke="#ff0000" stroke-width="1" stroke-dasharray="2 4"/>
<rect x="522" y="324" width="2" height="110" fill="url(#hatch)" stroke="none" stroke-width="1"/>
<line x1="521.5" y1="324" x2="521.5" y2="434" stroke="#ff0000" stroke-width="1" stroke-dasharray="3 5" stroke-dashoffset="5"/>
<line x1="524.5" y1="324" x2="524.5" y2="434" stroke="#ff0000" stroke-width="1" stroke-dasharray="3 5" stroke-dashoffset="5"/>
<line x1="521.5" y1="324" x2="521.5" y2="434" stroke="#ffff00" stroke-width="1" stroke-dasharray="5 3"/>
<line x1="524.5" y1="324" x2="524.5" y2="434" stroke="#ffff00" stroke-width="1" stroke-dasharray="5 3"/>
<line x1="523.0" y1="324" x2="523.0" y2="434" stroke="#ff0000" stroke-width="1" stroke-dasharray="2 4"/>
<rect x="521" y="382" width="30" height="2" fill="url(#hatch)" stroke="none" stroke-width="1"/>
<line x1="521" y1="381.5" x2="551" y2="381.5" stroke="#ff0000" stroke-width="1" stroke-dasharray="3 5" stroke-dashoffset="5"/>
<line x1="521" y1="384.5" x2="551" y2="384.5" stroke="#ff0000" stroke-width="1" stroke-dasharray="3 5" stroke-dashoffset="5"/>
<line x1="521" y1="381.5" x2="551" y2="381.5" stroke="#ffff00" stroke-width="1" stroke-dasharray="5 3"/>
<line x1="521" y1="384.5" x2="551" y2="384.5" stroke="#ffff00" stroke-width="1" stroke-dasharray="5 3"/>
<line x1="521" y1="383.0" x2="551" y2="383.0" stroke="#ff0000" stroke-width="1" stroke-dasharray="2 4"/>
<rect x="454" y="248" width="20" height="6" fill="#ffffff" stroke="none" stroke-width="1"/>
<rect x="350" y="291" width="3" height="30" fill="#ffffff" stroke="none" stroke-width="1"/>
<rect x="550" y="282" width="8" height="32" fill="#ffffff" stroke="none" stroke-width="1"/>
<rect x="362.0" y="415.5" width="6" height="4.5" fill="#ffffff" stroke="none" stroke-width="1"/>
<rect x="371.6" y="415.5" width="6" height="4.5" fill="#ffffff" stroke="none" stroke-width="1"/>
<rect x="381.2" y="415.5" width="6" height="4.5" fill="#ffffff" stroke="none" stroke-width="1"/>
<rect x="390.8" y="415.5" width="6" height="4.5" fill="#ffffff" stroke="none" stroke-width="1"/>
<rect x="400.4" y="415.5" width="6" height="4.5" fill="#ffffff" stroke="none" stroke-width="1"/>
<rect x="447.5" y="434" width="6.5" height="4.5" fill="#ffffff" stroke="none" stroke-width="1"/>
<rect x="458.1" y="434" width="6.5" height="4.5" fill="#ffffff" stroke="none" stroke-width="1"/>
<rect x="468.7" y="434" width="6.5" height="4.5" fill="#ffffff" stroke="none" stroke-width="1"/>
<rect x="479.3" y="434" width="6.5" height="4.5" fill="#ffffff" stroke="none" stroke-width="1"/>
<rect x="489.9" y="434" width="6.5" height="4.5" fill="#ffffff" stroke="none" stroke-width="1"/>
<rect x="500.5" y="434" width="6.5" height="4.5" fill="#ffffff" stroke="none" stroke-width="1"/>
<path d="M482.5 324.5 H521.5 V342" stroke="#ffff00" stroke-width="1" fill="none"/>
<line x1="482" y1="336" x2="521" y2="336" stroke="#ffff00" stroke-width="1" stroke-dasharray="4 2"/>
<rect x="524.5" y="324.5" width="27" height="25" fill="none" stroke="#ffffff" stroke-width="1"/>
<path d="M526 347 L550 340" stroke="#ffffff" stroke-width="1" fill="none"/>
<path transform="translate(496 331) scale(1)" d="M0.5 1 H3.5 V4 M0.5 4 H3.5 M4.8 0 V6.5 M1 6.5 H4" stroke="#00ffff" stroke-width="1.0" fill="none"/>
<path transform="translate(501 331) scale(1)" d="M0.5 0.5 V3.5 H3.5 M4.8 0 V4 M4.8 2 H6 M1 5 H5 V7 H1Z" stroke="#00ffff" stroke-width="1.0" fill="none"/>
<path transform="translate(506 331) scale(1)" d="M1 0.5 H4 L1 4 M2.5 2 L4.5 4 M5 0 V4.5 M0.5 5.5 H5 V7.5" stroke="#00ffff" stroke-width="1.0" fill="none"/>
<path transform="translate(530 331) scale(1)" d="M0.5 1 H3.5 V4 M0.5 4 H3.5 M4.8 0 V6.5 M1 6.5 H4" stroke="#00ffff" stroke-width="1.0" fill="none"/>
<path transform="translate(537 331) scale(1)" d="M0.5 0.5 V3.5 H3.5 M4.8 0 V4 M4.8 2 H6 M1 5 H5 V7 H1Z" stroke="#00ffff" stroke-width="1.0" fill="none"/>
<line x1="350.5" y1="188.5" x2="553.5" y2="188.5" stroke="#00ffff" stroke-width="1"/>
<line x1="337.5" y1="202.5" x2="553.5" y2="202.5" stroke="#00ffff" stroke-width="1"/>
<rect x="337.4" y="201.4" width="2.2" height="2.2" fill="#00ffff"/>
<rect x="349.4" y="201.4" width="2.2" height="2.2" fill="#00ffff"/>
<rect x="390.4" y="201.4" width="2.2" height="2.2" fill="#00ffff"/>
<rect x="442.4" y="201.4" width="2.2" height="2.2" fill="#00ffff"/>
<rect x="483.4" y="201.4" width="2.2" height="2.2" fill="#00ffff"/>
<rect x="552.4" y="201.4" width="2.2" height="2.2" fill="#00ffff"/>
<rect x="349.4" y="187.4" width="2.2" height="2.2" fill="#00ffff"/>
<rect x="552.4" y="187.4" width="2.2" height="2.2" fill="#00ffff"/>
<line x1="338.5" y1="203" x2="338.5" y2="216" stroke="#00ffff" stroke-width="1"/>
<line x1="350.5" y1="188" x2="350.5" y2="216" stroke="#00ffff" stroke-width="1"/>
<line x1="391.5" y1="203" x2="391.5" y2="214" stroke="#00ffff" stroke-width="1"/>
<line x1="443.5" y1="203" x2="443.5" y2="214" stroke="#00ffff" stroke-width="1"/>
<line x1="484.5" y1="203" x2="484.5" y2="216" stroke="#00ffff" stroke-width="1"/>
<line x1="553.5" y1="188" x2="553.5" y2="216" stroke="#00ffff" stroke-width="1"/>
<line x1="338.5" y1="216" x2="338.5" y2="499" stroke="#ff0000" stroke-width="1"/>
<line x1="350.5" y1="216" x2="350.5" y2="247" stroke="#ff0000" stroke-width="1"/>
<line x1="391.5" y1="214" x2="391.5" y2="247" stroke="#ff0000" stroke-width="1" stroke-dasharray="4 3"/>
<line x1="443.5" y1="214" x2="443.5" y2="247" stroke="#ff0000" stroke-width="1" stroke-dasharray="4 3"/>
<line x1="484.5" y1="216" x2="484.5" y2="247" stroke="#ff0000" stroke-width="1" stroke-dasharray="4 3"/>
<line x1="553.5" y1="216" x2="553.5" y2="247" stroke="#ff0000" stroke-width="1"/>
<g transform="translate(440.5 187) scale(0.7857142857142857 1.0) translate(0 -6)" fill="none" stroke="#00ffff" stroke-width="1" vector-effect="non-scaling-stroke" style="vector-effect:non-scaling-stroke"><path vector-effect="non-scaling-stroke" transform="translate(0 0)" d="M1 1 L2 0 V6 M1 6 H3"/><path vector-effect="non-scaling-stroke" transform="translate(5.0 0)" d="M1 0 H3 L4 1 V5 L3 6 H1 L0 5 V1 Z"/><path vector-effect="non-scaling-stroke" transform="translate(10.5 0)" d="M0.5 5.5 V6.5 L0 7.5"/><path vector-effect="non-scaling-stroke" transform="translate(13.0 0)" d="M4 0 H0.5 L0 2.5 H3 L4 3.5 V5 L3 6 H0"/><path vector-effect="non-scaling-stroke" transform="translate(18.5 0)" d="M1 0 H3 L4 1 V5 L3 6 H1 L0 5 V1 Z"/><path vector-effect="non-scaling-stroke" transform="translate(24.0 0)" d="M1 0 H3 L4 1 V5 L3 6 H1 L0 5 V1 Z"/></g>
<g transform="translate(339 201.5) scale(0.6896551724137931 0.8333333333333334) translate(0 -6)" fill="none" stroke="#00ffff" stroke-width="1" vector-effect="non-scaling-stroke" style="vector-effect:non-scaling-stroke"><path vector-effect="non-scaling-stroke" transform="translate(0 0)" d="M3.5 0 H2 L0 2 V5 L1 6 H3 L4 5 V4 L3 3 H0.5"/><path vector-effect="non-scaling-stroke" transform="translate(5.5 0)" d="M1 1 L2 0 V6 M1 6 H3"/><path vector-effect="non-scaling-stroke" transform="translate(10.5 0)" d="M1 0 H3 L4 1 V5 L3 6 H1 L0 5 V1 Z"/></g>
<g transform="translate(364 201.5) scale(0.6222222222222222 0.8333333333333334) translate(0 -6)" fill="none" stroke="#00ffff" stroke-width="1" vector-effect="non-scaling-stroke" style="vector-effect:non-scaling-stroke"><path vector-effect="non-scaling-stroke" transform="translate(0 0)" d="M0 1 L1 0 H3 L4 1 V2 L0 6 H4"/><path vector-effect="non-scaling-stroke" transform="translate(5.5 0)" d="M0.5 5.5 V6.5 L0 7.5"/><path vector-effect="non-scaling-stroke" transform="translate(8.0 0)" d="M1 1 L2 0 V6 M1 6 H3"/><path vector-effect="non-scaling-stroke" transform="translate(13.0 0)" d="M1 0 H3 L4 1 V5 L3 6 H1 L0 5 V1 Z"/><path vector-effect="non-scaling-stroke" transform="translate(18.5 0)" d="M1 0 H3 L4 1 V5 L3 6 H1 L0 5 V1 Z"/></g>
<g transform="translate(408 201.5) scale(0.75 0.8333333333333334) translate(0 -6)" fill="none" stroke="#00ffff" stroke-width="1" vector-effect="non-scaling-stroke" style="vector-effect:non-scaling-stroke"><path vector-effect="non-scaling-stroke" transform="translate(0 0)" d="M0 1 L1 0 H3 L4 1 V2 L0 6 H4"/><path vector-effect="non-scaling-stroke" transform="translate(9.0 0)" d="M0 0 H4 L1.5 6"/><path vector-effect="non-scaling-stroke" transform="translate(14.5 0)" d="M1 0 H3 L4 1 V5 L3 6 H1 L0 5 V1 Z"/><path vector-effect="non-scaling-stroke" transform="translate(20.0 0)" d="M1 0 H3 L4 1 V5 L3 6 H1 L0 5 V1 Z"/></g>
<g transform="translate(456 201.5) scale(0.6222222222222222 0.8333333333333334) translate(0 -6)" fill="none" stroke="#00ffff" stroke-width="1" vector-effect="non-scaling-stroke" style="vector-effect:non-scaling-stroke"><path vector-effect="non-scaling-stroke" transform="translate(0 0)" d="M0 1 L1 0 H3 L4 1 V2 L0 6 H4"/><path vector-effect="non-scaling-stroke" transform="translate(5.5 0)" d="M0.5 5.5 V6.5 L0 7.5"/><path vector-effect="non-scaling-stroke" transform="translate(8.0 0)" d="M1 1 L2 0 V6 M1 6 H3"/><path vector-effect="non-scaling-stroke" transform="translate(13.0 0)" d="M1 0 H3 L4 1 V5 L3 6 H1 L0 5 V1 Z"/><path vector-effect="non-scaling-stroke" transform="translate(18.5 0)" d="M1 0 H3 L4 1 V5 L3 6 H1 L0 5 V1 Z"/></g>
<g transform="translate(509 202) scale(0.8695652173913043 1.0) translate(0 -6)" fill="none" stroke="#00ffff" stroke-width="1" vector-effect="non-scaling-stroke" style="vector-effect:non-scaling-stroke"><path vector-effect="non-scaling-stroke" transform="translate(0 0)" d="M0 0.5 L0.5 0 H3 L4 1 V2 L3 3 H1.5 M3 3 L4 4 V5 L3 6 H1 L0 5.5"/><path vector-effect="non-scaling-stroke" transform="translate(5.5 0)" d="M0.5 5.5 V6.5 L0 7.5"/><path vector-effect="non-scaling-stroke" transform="translate(8.0 0)" d="M3.5 0 H2 L0 2 V5 L1 6 H3 L4 5 V4 L3 3 H0.5"/><path vector-effect="non-scaling-stroke" transform="translate(13.5 0)" d="M1 0 H3 L4 1 V5 L3 6 H1 L0 5 V1 Z"/><path vector-effect="non-scaling-stroke" transform="translate(19.0 0)" d="M1 0 H3 L4 1 V5 L3 6 H1 L0 5 V1 Z"/></g>
<line x1="259.5" y1="251" x2="259.5" y2="437" stroke="#00ffff" stroke-width="1"/>
<line x1="276.5" y1="251" x2="276.5" y2="437" stroke="#00ffff" stroke-width="1"/>
<line x1="256" y1="251.5" x2="292" y2="251.5" stroke="#00ffff" stroke-width="1"/>
<line x1="292" y1="251.5" x2="388" y2="251.5" stroke="#ff0000" stroke-width="1"/>
<line x1="276" y1="268.5" x2="291" y2="268.5" stroke="#00ffff" stroke-width="1"/>
<line x1="291" y1="268.5" x2="338" y2="268.5" stroke="#ff0000" stroke-width="1" stroke-dasharray="5 4"/>
<line x1="276" y1="343.5" x2="292" y2="343.5" stroke="#00ffff" stroke-width="1"/>
<line x1="292" y1="343.5" x2="336" y2="343.5" stroke="#ff0000" stroke-width="1" stroke-dasharray="5 4"/>
<line x1="276" y1="419.5" x2="292" y2="419.5" stroke="#00ffff" stroke-width="1"/>
<line x1="292" y1="419.5" x2="338" y2="419.5" stroke="#ff0000" stroke-width="1" stroke-dasharray="5 4"/>
<line x1="256" y1="436.5" x2="292" y2="436.5" stroke="#00ffff" stroke-width="1"/>
<line x1="292" y1="436.5" x2="338" y2="436.5" stroke="#ff0000" stroke-width="1" stroke-dasharray="5 4"/>
<rect x="258.4" y="250.4" width="2.2" height="2.2" fill="#00ffff"/>
<rect x="275.4" y="250.4" width="2.2" height="2.2" fill="#00ffff"/>
<rect x="275.4" y="267.4" width="2.2" height="2.2" fill="#00ffff"/>
<rect x="275.4" y="342.4" width="2.2" height="2.2" fill="#00ffff"/>
<rect x="275.4" y="418.4" width="2.2" height="2.2" fill="#00ffff"/>
<rect x="258.4" y="435.4" width="2.2" height="2.2" fill="#00ffff"/>
<rect x="275.4" y="435.4" width="2.2" height="2.2" fill="#00ffff"/>
<g transform="rotate(-90 276 266) translate(276 266) scale(0.8 1.0833333333333333) translate(0 -6)" fill="none" stroke="#00ffff" stroke-width="1" vector-effect="non-scaling-stroke" style="vector-effect:non-scaling-stroke"><path vector-effect="non-scaling-stroke" transform="translate(0 0)" d="M3.5 3 H1 L0 2 V1 L1 0 H3 L4 1 V4 L2 6 H0.5"/><path vector-effect="non-scaling-stroke" transform="translate(5.5 0)" d="M1 0 H3 L4 1 V5 L3 6 H1 L0 5 V1 Z"/><path vector-effect="non-scaling-stroke" transform="translate(11.0 0)" d="M1 0 H3 L4 1 V5 L3 6 H1 L0 5 V1 Z"/></g>
<g transform="rotate(-90 276 317) translate(276 317) scale(0.9166666666666666 1.0833333333333333) translate(0 -6)" fill="none" stroke="#00ffff" stroke-width="1" vector-effect="non-scaling-stroke" style="vector-effect:non-scaling-stroke"><path vector-effect="non-scaling-stroke" transform="translate(0 0)" d="M0 0.5 L0.5 0 H3 L4 1 V2 L3 3 H1.5 M3 3 L4 4 V5 L3 6 H1 L0 5.5"/><path vector-effect="non-scaling-stroke" transform="translate(9.0 0)" d="M3.5 3 H1 L0 2 V1 L1 0 H3 L4 1 V4 L2 6 H0.5"/><path vector-effect="non-scaling-stroke" transform="translate(14.5 0)" d="M1 0 H3 L4 1 V5 L3 6 H1 L0 5 V1 Z"/><path vector-effect="non-scaling-stroke" transform="translate(20.0 0)" d="M1 0 H3 L4 1 V5 L3 6 H1 L0 5 V1 Z"/></g>
<g transform="rotate(-90 259 353.5) translate(259 353.5) scale(0.8695652173913043 1.0833333333333333) translate(0 -6)" fill="none" stroke="#00ffff" stroke-width="1" vector-effect="non-scaling-stroke" style="vector-effect:non-scaling-stroke"><path vector-effect="non-scaling-stroke" transform="translate(0 0)" d="M3.5 3 H1 L0 2 V1 L1 0 H3 L4 1 V4 L2 6 H0.5"/><path vector-effect="non-scaling-stroke" transform="translate(5.5 0)" d="M0.5 5.5 V6.5 L0 7.5"/><path vector-effect="non-scaling-stroke" transform="translate(8.0 0)" d="M3.5 0 H2 L0 2 V5 L1 6 H3 L4 5 V4 L3 3 H0.5"/><path vector-effect="non-scaling-stroke" transform="translate(13.5 0)" d="M1 0 H3 L4 1 V5 L3 6 H1 L0 5 V1 Z"/><path vector-effect="non-scaling-stroke" transform="translate(19.0 0)" d="M1 0 H3 L4 1 V5 L3 6 H1 L0 5 V1 Z"/></g>
<g transform="rotate(-90 276 393) translate(276 393) scale(0.9166666666666666 1.0833333333333333) translate(0 -6)" fill="none" stroke="#00ffff" stroke-width="1" vector-effect="non-scaling-stroke" style="vector-effect:non-scaling-stroke"><path vector-effect="non-scaling-stroke" transform="translate(0 0)" d="M0 0.5 L0.5 0 H3 L4 1 V2 L3 3 H1.5 M3 3 L4 4 V5 L3 6 H1 L0 5.5"/><path vector-effect="non-scaling-stroke" transform="translate(9.0 0)" d="M3.5 3 H1 L0 2 V1 L1 0 H3 L4 1 V4 L2 6 H0.5"/><path vector-effect="non-scaling-stroke" transform="translate(14.5 0)" d="M1 0 H3 L4 1 V5 L3 6 H1 L0 5 V1 Z"/><path vector-effect="non-scaling-stroke" transform="translate(20.0 0)" d="M1 0 H3 L4 1 V5 L3 6 H1 L0 5 V1 Z"/></g>
<g transform="rotate(-90 276 433.5) translate(276 433.5) scale(0.8 1.0833333333333333) translate(0 -6)" fill="none" stroke="#00ffff" stroke-width="1" vector-effect="non-scaling-stroke" style="vector-effect:non-scaling-stroke"><path vector-effect="non-scaling-stroke" transform="translate(0 0)" d="M3.5 3 H1 L0 2 V1 L1 0 H3 L4 1 V4 L2 6 H0.5"/><path vector-effect="non-scaling-stroke" transform="translate(5.5 0)" d="M1 0 H3 L4 1 V5 L3 6 H1 L0 5 V1 Z"/><path vector-effect="non-scaling-stroke" transform="translate(11.0 0)" d="M1 0 H3 L4 1 V5 L3 6 H1 L0 5 V1 Z"/></g>
<line x1="557" y1="251.5" x2="618.5" y2="251.5" stroke="#ff0000" stroke-width="1"/>
<line x1="618.5" y1="251.5" x2="660" y2="251.5" stroke="#00ffff" stroke-width="1"/>
<line x1="640.5" y1="250" x2="640.5" y2="437" stroke="#00ffff" stroke-width="1"/>
<line x1="658.5" y1="250" x2="658.5" y2="437" stroke="#00ffff" stroke-width="1"/>
<line x1="618.5" y1="303.5" x2="643" y2="303.5" stroke="#00ffff" stroke-width="1"/>
<line x1="558" y1="343.5" x2="618.5" y2="343.5" stroke="#ff0000" stroke-width="1" stroke-dasharray="5 4"/>
<line x1="618.5" y1="343.5" x2="643" y2="343.5" stroke="#00ffff" stroke-width="1"/>
<line x1="556" y1="384.5" x2="618.5" y2="384.5" stroke="#ff0000" stroke-width="1"/>
<line x1="618.5" y1="384.5" x2="643" y2="384.5" stroke="#00ffff" stroke-width="1"/>
<line x1="556" y1="387.5" x2="618.5" y2="387.5" stroke="#ff0000" stroke-width="1"/>
<line x1="618.5" y1="387.5" x2="631" y2="387.5" stroke="#00ffff" stroke-width="1"/>
<line x1="629.5" y1="387.5" x2="629.5" y2="434" stroke="#00ffff" stroke-width="1"/>
<line x1="558" y1="436.5" x2="618.5" y2="436.5" stroke="#ff0000" stroke-width="1" stroke-dasharray="5 4"/>
<line x1="618.5" y1="436.5" x2="660" y2="436.5" stroke="#00ffff" stroke-width="1"/>
<rect x="639.4" y="250.4" width="2.2" height="2.2" fill="#00ffff"/>
<rect x="657.4" y="250.4" width="2.2" height="2.2" fill="#00ffff"/>
<rect x="639.4" y="302.4" width="2.2" height="2.2" fill="#00ffff"/>
<rect x="639.4" y="342.4" width="2.2" height="2.2" fill="#00ffff"/>
<rect x="639.4" y="383.4" width="2.2" height="2.2" fill="#00ffff"/>
<rect x="627.9" y="386.4" width="2.2" height="2.2" fill="#00ffff"/>
<rect x="639.4" y="435.4" width="2.2" height="2.2" fill="#00ffff"/>
<rect x="657.4" y="435.4" width="2.2" height="2.2" fill="#00ffff"/>
<g transform="rotate(-90 639.5 287.5) translate(639.5 287.5) scale(0.9130434782608695 1.0833333333333333) translate(0 -6)" fill="none" stroke="#00ffff" stroke-width="1" vector-effect="non-scaling-stroke" style="vector-effect:non-scaling-stroke"><path vector-effect="non-scaling-stroke" transform="translate(0 0)" d="M0 1 L1 0 H3 L4 1 V2 L0 6 H4"/><path vector-effect="non-scaling-stroke" transform="translate(5.5 0)" d="M0.5 5.5 V6.5 L0 7.5"/><path vector-effect="non-scaling-stroke" transform="translate(8.0 0)" d="M0 0 H4 L1.5 6"/><path vector-effect="non-scaling-stroke" transform="translate(13.5 0)" d="M1 0 H3 L4 1 V5 L3 6 H1 L0 5 V1 Z"/><path vector-effect="non-scaling-stroke" transform="translate(19.0 0)" d="M1 0 H3 L4 1 V5 L3 6 H1 L0 5 V1 Z"/></g>
<g transform="rotate(-90 640 334) translate(640 334) scale(0.9333333333333333 1.0833333333333333) translate(0 -6)" fill="none" stroke="#00ffff" stroke-width="1" vector-effect="non-scaling-stroke" style="vector-effect:non-scaling-stroke"><path vector-effect="non-scaling-stroke" transform="translate(0 0)" d="M0 1 L1 0 H3 L4 1 V2 L0 6 H4"/><path vector-effect="non-scaling-stroke" transform="translate(5.5 0)" d="M0.5 5.5 V6.5 L0 7.5"/><path vector-effect="non-scaling-stroke" transform="translate(8.0 0)" d="M1 1 L2 0 V6 M1 6 H3"/><path vector-effect="non-scaling-stroke" transform="translate(13.0 0)" d="M1 0 H3 L4 1 V5 L3 6 H1 L0 5 V1 Z"/><path vector-effect="non-scaling-stroke" transform="translate(18.5 0)" d="M1 0 H3 L4 1 V5 L3 6 H1 L0 5 V1 Z"/></g>
<g transform="rotate(-90 658 353.6) translate(658 353.6) scale(0.8695652173913043 1.0833333333333333) translate(0 -6)" fill="none" stroke="#00ffff" stroke-width="1" vector-effect="non-scaling-stroke" style="vector-effect:non-scaling-stroke"><path vector-effect="non-scaling-stroke" transform="translate(0 0)" d="M3.5 3 H1 L0 2 V1 L1 0 H3 L4 1 V4 L2 6 H0.5"/><path vector-effect="non-scaling-stroke" transform="translate(5.5 0)" d="M0.5 5.5 V6.5 L0 7.5"/><path vector-effect="non-scaling-stroke" transform="translate(8.0 0)" d="M3.5 0 H2 L0 2 V5 L1 6 H3 L4 5 V4 L3 3 H0.5"/><path vector-effect="non-scaling-stroke" transform="translate(13.5 0)" d="M1 0 H3 L4 1 V5 L3 6 H1 L0 5 V1 Z"/><path vector-effect="non-scaling-stroke" transform="translate(19.0 0)" d="M1 0 H3 L4 1 V5 L3 6 H1 L0 5 V1 Z"/></g>
<g transform="rotate(-90 640.5 373.3) translate(640.5 373.3) scale(0.8444444444444444 1.0833333333333333) translate(0 -6)" fill="none" stroke="#00ffff" stroke-width="1" vector-effect="non-scaling-stroke" style="vector-effect:non-scaling-stroke"><path vector-effect="non-scaling-stroke" transform="translate(0 0)" d="M0 1 L1 0 H3 L4 1 V2 L0 6 H4"/><path vector-effect="non-scaling-stroke" transform="translate(5.5 0)" d="M0.5 5.5 V6.5 L0 7.5"/><path vector-effect="non-scaling-stroke" transform="translate(8.0 0)" d="M1 1 L2 0 V6 M1 6 H3"/><path vector-effect="non-scaling-stroke" transform="translate(13.0 0)" d="M1 0 H3 L4 1 V5 L3 6 H1 L0 5 V1 Z"/><path vector-effect="non-scaling-stroke" transform="translate(18.5 0)" d="M1 0 H3 L4 1 V5 L3 6 H1 L0 5 V1 Z"/></g>
<g transform="rotate(-90 639.5 419.7) translate(639.5 419.7) scale(0.8695652173913043 1.0833333333333333) translate(0 -6)" fill="none" stroke="#00ffff" stroke-width="1" vector-effect="non-scaling-stroke" style="vector-effect:non-scaling-stroke"><path vector-effect="non-scaling-stroke" transform="translate(0 0)" d="M0 1 L1 0 H3 L4 1 V2 L0 6 H4"/><path vector-effect="non-scaling-stroke" transform="translate(5.5 0)" d="M0.5 5.5 V6.5 L0 7.5"/><path vector-effect="non-scaling-stroke" transform="translate(8.0 0)" d="M0 0 H4 L1.5 6"/><path vector-effect="non-scaling-stroke" transform="translate(13.5 0)" d="M1 0 H3 L4 1 V5 L3 6 H1 L0 5 V1 Z"/><path vector-effect="non-scaling-stroke" transform="translate(19.0 0)" d="M1 0 H3 L4 1 V5 L3 6 H1 L0 5 V1 Z"/></g>
<line x1="618" y1="422.5" x2="631.5" y2="422.5" stroke="#00ffff" stroke-width="1"/>
<line x1="618" y1="428.5" x2="631.5" y2="428.5" stroke="#00ffff" stroke-width="1"/>
<rect x="625" y="421" width="4" height="8" fill="#00ffff" stroke="none" stroke-width="1"/>
<g transform="rotate(-90 628.5 411) translate(628.5 411) scale(0.7333333333333333 1.0) translate(0 -6)" fill="none" stroke="#00ffff" stroke-width="1" vector-effect="non-scaling-stroke" style="vector-effect:non-scaling-stroke"><path vector-effect="non-scaling-stroke" transform="translate(0 0)" d="M0 0.5 L0.5 0 H3 L4 1 V2 L3 3 H1.5 M3 3 L4 4 V5 L3 6 H1 L0 5.5"/><path vector-effect="non-scaling-stroke" transform="translate(5.5 0)" d="M1 0 H3 L4 1 V5 L3 6 H1 L0 5 V1 Z"/><path vector-effect="non-scaling-stroke" transform="translate(11.0 0)" d="M1 0 H3 L4 1 V5 L3 6 H1 L0 5 V1 Z"/></g>
<line x1="338.5" y1="500" x2="338.5" y2="529" stroke="#00ffff" stroke-width="1"/>
<line x1="431.5" y1="500" x2="431.5" y2="520" stroke="#00ffff" stroke-width="1"/>
<line x1="524.5" y1="500" x2="524.5" y2="520" stroke="#00ffff" stroke-width="1"/>
<line x1="553.5" y1="500" x2="553.5" y2="529" stroke="#00ffff" stroke-width="1"/>
<line x1="431.5" y1="441" x2="431.5" y2="499" stroke="#ff0000" stroke-width="1" stroke-dasharray="4 3"/>
<line x1="524.5" y1="441" x2="524.5" y2="499" stroke="#ff0000" stroke-width="1"/>
<line x1="553.5" y1="384" x2="553.5" y2="499" stroke="#ff0000" stroke-width="1"/>
<line x1="338.5" y1="515.5" x2="554" y2="515.5" stroke="#00ffff" stroke-width="1"/>
<line x1="338.5" y1="525.5" x2="554" y2="525.5" stroke="#00ffff" stroke-width="1"/>
<rect x="337.4" y="514.4" width="2.2" height="2.2" fill="#00ffff"/>
<rect x="430.4" y="514.4" width="2.2" height="2.2" fill="#00ffff"/>
<rect x="552.4" y="514.4" width="2.2" height="2.2" fill="#00ffff"/>
<rect x="337.4" y="524.4" width="2.2" height="2.2" fill="#00ffff"/>
<rect x="552.4" y="524.4" width="2.2" height="2.2" fill="#00ffff"/>
<g transform="translate(376 514.5) scale(0.8478260869565217 1.0) translate(0 -6)" fill="none" stroke="#00ffff" stroke-width="1" vector-effect="non-scaling-stroke" style="vector-effect:non-scaling-stroke"><path vector-effect="non-scaling-stroke" transform="translate(0 0)" d="M3 6 V0 L0 4 V4.5 H4"/><path vector-effect="non-scaling-stroke" transform="translate(5.5 0)" d="M0.5 5.5 V6.5 L0 7.5"/><path vector-effect="non-scaling-stroke" transform="translate(8.0 0)" d="M1 0 H3 L4 1 V2 L3 3 H1 L0 2 V1 Z M1 3 L0 4 V5 L1 6 H3 L4 5 V4 L3 3"/><path vector-effect="non-scaling-stroke" transform="translate(13.5 0)" d="M1 0 H3 L4 1 V5 L3 6 H1 L0 5 V1 Z"/><path vector-effect="non-scaling-stroke" transform="translate(19.0 0)" d="M1 0 H3 L4 1 V5 L3 6 H1 L0 5 V1 Z"/></g>
<g transform="translate(467.4 514.5) scale(0.9166666666666666 1.0) translate(0 -6)" fill="none" stroke="#00ffff" stroke-width="1" vector-effect="non-scaling-stroke" style="vector-effect:non-scaling-stroke"><path vector-effect="non-scaling-stroke" transform="translate(0 0)" d="M3 6 V0 L0 4 V4.5 H4"/><path vector-effect="non-scaling-stroke" transform="translate(9.0 0)" d="M1 0 H3 L4 1 V2 L3 3 H1 L0 2 V1 Z M1 3 L0 4 V5 L1 6 H3 L4 5 V4 L3 3"/><path vector-effect="non-scaling-stroke" transform="translate(14.5 0)" d="M1 0 H3 L4 1 V5 L3 6 H1 L0 5 V1 Z"/><path vector-effect="non-scaling-stroke" transform="translate(20.0 0)" d="M1 0 H3 L4 1 V5 L3 6 H1 L0 5 V1 Z"/></g>
<g transform="translate(529 514.5) scale(0.8666666666666667 1.0) translate(0 -6)" fill="none" stroke="#00ffff" stroke-width="1" vector-effect="non-scaling-stroke" style="vector-effect:non-scaling-stroke"><path vector-effect="non-scaling-stroke" transform="translate(0 0)" d="M1 1 L2 0 V6 M1 6 H3"/><path vector-effect="non-scaling-stroke" transform="translate(5.0 0)" d="M0.5 5.5 V6.5 L0 7.5"/><path vector-effect="non-scaling-stroke" transform="translate(7.5 0)" d="M4 0 H0.5 L0 2.5 H3 L4 3.5 V5 L3 6 H0"/><path vector-effect="non-scaling-stroke" transform="translate(13.0 0)" d="M1 0 H3 L4 1 V5 L3 6 H1 L0 5 V1 Z"/><path vector-effect="non-scaling-stroke" transform="translate(18.5 0)" d="M1 0 H3 L4 1 V5 L3 6 H1 L0 5 V1 Z"/></g>
<g transform="translate(437 524) scale(0.7037037037037037 1.0) translate(0 -6)" fill="none" stroke="#00ffff" stroke-width="1" vector-effect="non-scaling-stroke" style="vector-effect:non-scaling-stroke"><path vector-effect="non-scaling-stroke" transform="translate(0 0)" d="M1 1 L2 0 V6 M1 6 H3"/><path vector-effect="non-scaling-stroke" transform="translate(5.0 0)" d="M1 1 L2 0 V6 M1 6 H3"/><path vector-effect="non-scaling-stroke" transform="translate(10.0 0)" d="M0.5 5.5 V6.5 L0 7.5"/><path vector-effect="non-scaling-stroke" transform="translate(12.5 0)" d="M1 1 L2 0 V6 M1 6 H3"/><path vector-effect="non-scaling-stroke" transform="translate(17.5 0)" d="M1 0 H3 L4 1 V5 L3 6 H1 L0 5 V1 Z"/><path vector-effect="non-scaling-stroke" transform="translate(23.0 0)" d="M1 0 H3 L4 1 V5 L3 6 H1 L0 5 V1 Z"/></g>
<path d="M379 256 V239.5 H565.5 V395.5 H536.5 V448.5 H528" stroke="#00ff00" stroke-width="1" fill="none" stroke-dasharray="4 3"/>
<path d="M327.5 331.5 V430.5 H421" stroke="#00ff00" stroke-width="1" fill="none" stroke-dasharray="4 3"/>
<line x1="327.5" y1="331.5" x2="338" y2="331.5" stroke="#00ff00" stroke-width="1" stroke-dasharray="4 3"/>
<path d="M420.5 434 V448.5 H528" stroke="#00ff00" stroke-width="1" fill="none" stroke-dasharray="4 3"/>
<line x1="338.5" y1="257" x2="338.5" y2="331" stroke="#00ff00" stroke-width="1" stroke-dasharray="4 3"/>
<line x1="338" y1="256.5" x2="341" y2="256.5" stroke="#00ff00" stroke-width="1"/>
<line x1="376" y1="256.5" x2="379" y2="256.5" stroke="#00ff00" stroke-width="1"/>
<line x1="446" y1="343" x2="551" y2="343" stroke="#ff0000" stroke-width="1" stroke-dasharray="5 3"/>
<line x1="557" y1="384.5" x2="618.5" y2="384.5" stroke="#ff0000" stroke-width="1"/>
<line x1="229.5" y1="213.8" x2="247.9" y2="183.1" stroke="#ffffff" stroke-width="1"/>
<line x1="240.5" y1="192.5" x2="295" y2="192.5" stroke="#ffffff" stroke-width="1"/>
<line x1="239" y1="196.5" x2="295" y2="196.5" stroke="#ffffff" stroke-width="1"/>
<line x1="256.5" y1="196.5" x2="256.5" y2="227.5" stroke="#ffffff" stroke-width="1"/>
<line x1="265.5" y1="196.5" x2="265.5" y2="227.5" stroke="#ffffff" stroke-width="1"/>
<line x1="275.5" y1="196.5" x2="275.5" y2="227.5" stroke="#ffffff" stroke-width="1"/>
<line x1="285.5" y1="196.5" x2="285.5" y2="227.5" stroke="#ffffff" stroke-width="1"/>
<line x1="295.5" y1="192" x2="295.5" y2="227.5" stroke="#ffffff" stroke-width="1"/>
<line x1="266" y1="209.5" x2="295" y2="209.5" stroke="#00ffff" stroke-width="1"/>
<path d="M270 206 L266 209.5 L270 213" stroke="#00ffff" stroke-width="1" fill="none"/>
<rect x="293.4" y="208.4" width="2.2" height="2.2" fill="#00ffff"/>
<rect x="287.5" y="211.5" width="8" height="8" fill="#ffff00" stroke="#0000ff" stroke-width="1"/>
<line x1="304.5" y1="174" x2="304.5" y2="227.5" stroke="#00ffff" stroke-width="1"/>
<line x1="296" y1="192.5" x2="307" y2="192.5" stroke="#00ffff" stroke-width="1"/>
<line x1="296" y1="196.5" x2="307" y2="196.5" stroke="#00ffff" stroke-width="1"/>
<line x1="296" y1="227.5" x2="307" y2="227.5" stroke="#00ffff" stroke-width="1"/>
<g transform="rotate(-90 303 189) translate(303 189) scale(0.9655172413793104 1.0833333333333333) translate(0 -6)" fill="none" stroke="#00ffff" stroke-width="1" vector-effect="non-scaling-stroke" style="vector-effect:non-scaling-stroke"><path vector-effect="non-scaling-stroke" transform="translate(0 0)" d="M1 1 L2 0 V6 M1 6 H3"/><path vector-effect="non-scaling-stroke" transform="translate(5.0 0)" d="M1 0 H3 L4 1 V5 L3 6 H1 L0 5 V1 Z"/><path vector-effect="non-scaling-stroke" transform="translate(10.5 0)" d="M1 0 H3 L4 1 V5 L3 6 H1 L0 5 V1 Z"/></g>
<g transform="rotate(-90 303 218.5) translate(303 218.5) scale(0.9333333333333333 1.0833333333333333) translate(0 -6)" fill="none" stroke="#00ffff" stroke-width="1" vector-effect="non-scaling-stroke" style="vector-effect:non-scaling-stroke"><path vector-effect="non-scaling-stroke" transform="translate(0 0)" d="M1 0 H3 L4 1 V2 L3 3 H1 L0 2 V1 Z M1 3 L0 4 V5 L1 6 H3 L4 5 V4 L3 3"/><path vector-effect="non-scaling-stroke" transform="translate(5.5 0)" d="M1 0 H3 L4 1 V5 L3 6 H1 L0 5 V1 Z"/><path vector-effect="non-scaling-stroke" transform="translate(11.0 0)" d="M1 0 H3 L4 1 V5 L3 6 H1 L0 5 V1 Z"/></g>
<line x1="267" y1="235.5" x2="295" y2="235.5" stroke="#00ffff" stroke-width="1"/>
<line x1="285.5" y1="228" x2="285.5" y2="238" stroke="#00ffff" stroke-width="1"/>
<line x1="295.5" y1="228" x2="295.5" y2="238" stroke="#00ffff" stroke-width="1"/>
<rect x="293.4" y="233.9" width="2.2" height="2.2" fill="#00ffff"/>
<g transform="translate(268 234.5) scale(0.9333333333333333 1.0) translate(0 -6)" fill="none" stroke="#00ffff" stroke-width="1" vector-effect="non-scaling-stroke" style="vector-effect:non-scaling-stroke"><path vector-effect="non-scaling-stroke" transform="translate(0 0)" d="M0 1 L1 0 H3 L4 1 V2 L0 6 H4"/><path vector-effect="non-scaling-stroke" transform="translate(5.5 0)" d="M0 0.5 L0.5 0 H3 L4 1 V2 L3 3 H1.5 M3 3 L4 4 V5 L3 6 H1 L0 5.5"/><path vector-effect="non-scaling-stroke" transform="translate(11.0 0)" d="M1 0 H3 L4 1 V5 L3 6 H1 L0 5 V1 Z"/></g>
<path d="M310 210 L318 210.5 C332 212 345 220 358 227 C366 231 372 233 381 232.5 C395 231 410 227 430 215.5" stroke="#00ffff" stroke-width="1" fill="none"/>
<path d="M316 207 L310 210 L316 213 Z" stroke="#00ffff" stroke-width="1" fill="#00ffff"/>
<path d="M430 215.5 C440 212 452 216 460 230" stroke="#00ffff" stroke-width="1" fill="none" stroke-dasharray="4 4" stroke-dashoffset="2"/>
<path d="M550 239 C556 230 562 220 575 219 C588 219 596 230 606 234 C610 233 611 220 611.5 209" stroke="#00ffff" stroke-width="1" fill="none"/>
<path d="M548 239 L552 229 L556 234 Z" stroke="#00ffff" stroke-width="1" fill="#00ffff"/>
<path transform="translate(571 194.5) scale(1)" d="M2 0.5 L4 1 M0 2.5 H5.5 M3 2.5 L0.5 9 M3 3 L5.5 8 M9 0 V10 M6 5 H9" stroke="#00ffff" stroke-width="1.0" fill="none"/>
<path transform="translate(582.8 194.5) scale(1)" d="M0.5 2.5 H6.5 V8.5 H0.5 Z M9.5 0 V10 M9.5 5 H11" stroke="#00ffff" stroke-width="1.0" fill="none"/>
<path transform="translate(594.6 194.5) scale(1)" d="M0.5 1 V8.5 H7 M9.5 0 V10 M9.5 4.5 H11" stroke="#00ffff" stroke-width="1.0" fill="none"/>
<path transform="translate(608.2 194.5) scale(1)" d="M4.5 0.5 C7.5 0.5 7.5 3.5 4.5 3.5 C1.5 3.5 1.5 0.5 4.5 0.5 M4.5 3.5 V5 M0 5.5 H9.5 M1 7 H8.5 V10 H1 Z" stroke="#00ffff" stroke-width="1.0" fill="none"/>
<rect x="619.2" y="196.7" width="1.6" height="1.6" fill="#00ffff"/>
<rect x="619.2" y="201.2" width="1.6" height="1.6" fill="#00ffff"/>
<g transform="translate(623 204.5) scale(1.5666666666666667 1.6666666666666667) translate(0 -6)" fill="none" stroke="#00ffff" stroke-width="1" vector-effect="non-scaling-stroke" style="vector-effect:non-scaling-stroke"><path vector-effect="non-scaling-stroke" transform="translate(0 0)" d="M3.5 0 H2 L0 2 V5 L1 6 H3 L4 5 V4 L3 3 H0.5"/><path vector-effect="non-scaling-stroke" transform="translate(5.5 0)" d="M1 0 H3 L4 1 V5 L3 6 H1 L0 5 V1 Z"/><path vector-effect="non-scaling-stroke" transform="translate(11.0 0)" d="M1 0 H3 L4 1 V5 L3 6 H1 L0 5 V1 Z"/></g>
<circle cx="671" cy="196.5" r="14.5" stroke="#00ffff" fill="none"/>
<line x1="656.5" y1="196.5" x2="685.5" y2="196.5" stroke="#00ffff" stroke-width="1"/>
<line x1="671" y1="182" x2="671" y2="211" stroke="#00ffff" stroke-width="1"/>
<g transform="translate(669 180) scale(1.25 1.1666666666666667) translate(0 -6)" fill="none" stroke="#00ffff" stroke-width="1" vector-effect="non-scaling-stroke" style="vector-effect:non-scaling-stroke"><path vector-effect="non-scaling-stroke" transform="translate(0 0)" d="M0 6 V0 L4 6 V0"/></g>
<rect x="614.5" y="211.5" width="8" height="8" fill="#ffff00" stroke="#0000ff" stroke-width="1"/>
<path d="M414.5 247.5 V230.5 H457.5 V247.5" stroke="#ffffff" stroke-width="1" fill="none"/>
<path d="M416.5 247.5 V232.5 H456.5" stroke="#ffffff" stroke-width="1" fill="none"/>
<line x1="438.5" y1="233" x2="438.5" y2="247" stroke="#ffffff" stroke-width="1"/>
<line x1="443.5" y1="233" x2="443.5" y2="247" stroke="#ffffff" stroke-width="1"/>
<line x1="448.5" y1="233" x2="448.5" y2="247" stroke="#ffffff" stroke-width="1"/>
<line x1="452.5" y1="233" x2="452.5" y2="247" stroke="#ffffff" stroke-width="1"/>
<line x1="456.5" y1="233" x2="456.5" y2="247" stroke="#ffffff" stroke-width="1"/>
<path d="M419.5 254 V235.5 C427 236 433 241 435.5 248" stroke="#ffffff" stroke-width="1" fill="none"/>
<rect x="418.5" y="247.5" width="17" height="6" fill="#ffffff" stroke="none" stroke-width="1"/>
<line x1="419" y1="250.5" x2="435" y2="250.5" stroke="#000" stroke-width="1"/>
<line x1="419" y1="251.5" x2="435" y2="251.5" stroke="#000" stroke-width="1"/>
<line x1="418.5" y1="247.5" x2="435.5" y2="247.5" stroke="#ff0000" stroke-width="1"/>
<path d="M412 231 C410 236 410 242 411 247" stroke="#00ffff" stroke-width="1" fill="none" stroke-dasharray="2 2"/>
<line x1="445" y1="239.5" x2="460" y2="239.5" stroke="#00ffff" stroke-width="1"/>
<g transform="translate(460.5 241) scale(1.1578947368421053 1.0) translate(0 -6)" fill="none" stroke="#00ffff" stroke-width="1" vector-effect="non-scaling-stroke" style="vector-effect:non-scaling-stroke"><path vector-effect="non-scaling-stroke" transform="translate(0 0)" d="M0 2 V5 L1 6 H3 L4 5 V2 M4 5 V6"/><path vector-effect="non-scaling-stroke" transform="translate(5.5 0)" d="M0 8 V2 H3 L4 3 V5 L3 6 H0"/></g>
<path d="M402 226 C406 226 410 224 417 222" stroke="#00ffff" stroke-width="1" fill="none" stroke-dasharray="3 2"/>
<path d="M347.5 285.5 H329.5 V247.5 H377.5 V249.5" stroke="#ffffff" stroke-width="1" fill="none"/>
<path d="M347.5 283.5 H331.5 V249.5 H377.5" stroke="#ffffff" stroke-width="1" fill="none"/>
<line x1="352.5" y1="249.5" x2="352.5" y2="265" stroke="#ffffff" stroke-width="1"/>
<line x1="357.5" y1="249.5" x2="357.5" y2="265" stroke="#ffffff" stroke-width="1"/>
<line x1="362.5" y1="249.5" x2="362.5" y2="265" stroke="#ffffff" stroke-width="1"/>
<line x1="367.5" y1="249.5" x2="367.5" y2="265" stroke="#ffffff" stroke-width="1"/>
<line x1="371.5" y1="249.5" x2="371.5" y2="265" stroke="#ffffff" stroke-width="1"/>
<line x1="376.5" y1="249.5" x2="376.5" y2="265" stroke="#ffffff" stroke-width="1"/>
<path d="M332 257 L347.6 267.6 M340.7 249.5 L349.5 265" stroke="#ffffff" stroke-width="1" fill="none"/>
<line x1="341" y1="256.5" x2="376" y2="256.5" stroke="#00ffff" stroke-width="1"/>
<path d="M341.5 256.5 V266 M339.5 263 L341.5 266.5 L343.5 263" stroke="#00ffff" stroke-width="1" fill="none"/>
<g transform="translate(377 259) scale(1.0526315789473684 1.0) translate(0 -6)" fill="none" stroke="#00ffff" stroke-width="1" vector-effect="non-scaling-stroke" style="vector-effect:non-scaling-stroke"><path vector-effect="non-scaling-stroke" transform="translate(0 0)" d="M0 0 V6 H2.5 L4 4.5 V1.5 L2.5 0 Z"/><path vector-effect="non-scaling-stroke" transform="translate(5.5 0)" d="M0 6 V0 L4 6 V0"/></g>
<path transform="translate(412 270) scale(1)" d="M0.5 1 H3.5 V4 M0.5 4 H3.5 M4.8 0 V6.5 M1 6.5 H4" stroke="#00ffff" stroke-width="1.0" fill="none"/>
<path transform="translate(419 270) scale(1)" d="M0.5 0.5 V3.5 H3.5 M4.8 0 V4 M4.8 2 H6 M1 5 H5 V7 H1Z" stroke="#00ffff" stroke-width="1.0" fill="none"/>
<path transform="translate(453 271) scale(1)" d="M0.5 1 H3.5 V4 M0.5 4 H3.5 M4.8 0 V6.5 M1 6.5 H4" stroke="#00ffff" stroke-width="1.0" fill="none"/>
<path transform="translate(460 271) scale(1)" d="M0.5 0.5 V3.5 H3.5 M4.8 0 V4 M4.8 2 H6 M1 5 H5 V7 H1Z" stroke="#00ffff" stroke-width="1.0" fill="none"/>
<path transform="translate(365 287) scale(1)" d="M0.5 1 H3.5 V4 M0.5 4 H3.5 M4.8 0 V6.5 M1 6.5 H4" stroke="#00ffff" stroke-width="1.0" fill="none"/>
<path transform="translate(512 281) scale(1)" d="M0.5 1 H3.5 V4 M0.5 4 H3.5 M4.8 0 V6.5 M1 6.5 H4" stroke="#00ffff" stroke-width="1.0" fill="none"/>
<path transform="translate(376 377) scale(1)" d="M0.5 1 H3.5 V4 M0.5 4 H3.5 M4.8 0 V6.5 M1 6.5 H4" stroke="#00ffff" stroke-width="1.0" fill="none"/>
<path transform="translate(529 364) scale(1)" d="M0.5 1 H3.5 V4 M0.5 4 H3.5 M4.8 0 V6.5 M1 6.5 H4" stroke="#00ffff" stroke-width="1.0" fill="none"/>
<path transform="translate(536 364) scale(1)" d="M0.5 0.5 V3.5 H3.5 M4.8 0 V4 M4.8 2 H6 M1 5 H5 V7 H1Z" stroke="#00ffff" stroke-width="1.0" fill="none"/>
<path transform="translate(465 391) scale(1)" d="M0.5 1 H3.5 V4 M0.5 4 H3.5 M4.8 0 V6.5 M1 6.5 H4" stroke="#00ffff" stroke-width="1.0" fill="none"/>
<path transform="translate(472 391) scale(1)" d="M0.5 0.5 V3.5 H3.5 M4.8 0 V4 M4.8 2 H6 M1 5 H5 V7 H1Z" stroke="#00ffff" stroke-width="1.0" fill="none"/>
<path transform="translate(460 348) scale(1)" d="M0.5 1 H3.5 V4 M0.5 4 H3.5 M4.8 0 V6.5 M1 6.5 H4" stroke="#00ffff" stroke-width="1.0" fill="none"/>
<rect x="466" y="457.8" width="24" height="9.2" fill="#000" stroke="none" stroke-width="1"/>
<path transform="translate(466.5 459) scale(1)" d="M4 0.5 H0.5 V6.5 H4 M0.5 3.5 H4 M6 0 V7.5" stroke="#00ffff" stroke-width="1.0" fill="none"/>
<path transform="translate(474.5 459) scale(1)" d="M0.5 0.5 H4.5 V3.5 H0.5 V6.5 H4.5 M7 0 V7.5 M7 3.5 H8.5" stroke="#00ffff" stroke-width="1.0" fill="none"/>
<path transform="translate(483 459) scale(1)" d="M3.5 0.5 L0.5 4 M3.5 0.5 L6.5 4 M0 6.5 H7" stroke="#00ffff" stroke-width="1.0" fill="none"/>
<g transform="translate(472.5 492) scale(1.105263157894737 1.0833333333333333) translate(0 -6)" fill="none" stroke="#00ffff" stroke-width="1" vector-effect="non-scaling-stroke" style="vector-effect:non-scaling-stroke"><path vector-effect="non-scaling-stroke" transform="translate(0 0)" d="M0 2 V5 L1 6 H3 L4 5 V2 M4 5 V6"/><path vector-effect="non-scaling-stroke" transform="translate(5.5 0)" d="M0 8 V2 H3 L4 3 V5 L3 6 H0"/></g>
<line x1="477.5" y1="475" x2="477.5" y2="486" stroke="#00ffff" stroke-width="1"/>
<path d="M475 478 L477.5 475 L480 478" stroke="#00ffff" stroke-width="1" fill="none"/>
<path d="M376 298 H381 M376 298 V303 M380 309 L384 313 M389 299 H394 V315 M385 315 H394" stroke="#ffffff" stroke-width="1" fill="none"/>
<path d="M415.5 356 H421 M415.5 356 V361 M420 366 L425 371 M430 356 H436 V373 M428 373 H436" stroke="#ffffff" stroke-width="1" fill="none"/>
<path d="M482.5 306 V324 M485.5 306 V324 M482 324.5 H500" stroke="#ffffff" stroke-width="1" fill="none"/>
<path d="M487 307 C494 308 500 313 501 322" stroke="#ffffff" stroke-width="1" fill="none" stroke-dasharray="3 2"/>
<path d="M461 297 C462 292 466 287 474 286 M477.5 286 V296" stroke="#ffffff" stroke-width="1" fill="none"/>
<rect x="459.5" y="301" width="6" height="4" fill="#ffffff" stroke="none" stroke-width="1"/>
<rect x="469.5" y="301" width="8" height="4" fill="#ffffff" stroke="none" stroke-width="1"/>
<line x1="446" y1="303.5" x2="618.5" y2="303.5" stroke="#ff0000" stroke-width="1" stroke-dasharray="5 4"/>
<line x1="441.5" y1="333.5" x2="479" y2="333.5" stroke="#ffff00" stroke-width="1" stroke-dasharray="4 3"/>
<line x1="484.5" y1="225" x2="484.5" y2="247" stroke="#ff0000" stroke-width="1" stroke-dasharray="4 3"/>
<path d="M533.5 381.5 H549.5 V401.5 H546 C540 400 536 396 533.5 390 Z" stroke="#ffffff" stroke-width="1.2" fill="#000"/>
<line x1="534" y1="386" x2="549" y2="386" stroke="#ff0000" stroke-width="1.5"/>
<line x1="527.5" y1="385" x2="527.5" y2="422" stroke="#ffffff" stroke-width="1" stroke-dasharray="3 2"/>
<line x1="428.5" y1="441" x2="428.5" y2="475" stroke="#ffffff" stroke-width="1" stroke-dasharray="4 2"/>
<line x1="528.5" y1="441" x2="528.5" y2="487" stroke="#ffffff" stroke-width="1"/>
<line x1="428" y1="474.5" x2="528.5" y2="474.5" stroke="#ffffff" stroke-width="1"/>
<rect x="428.5" y="480.5" width="100" height="6" fill="none" stroke="#ffffff" stroke-width="1"/>
<rect x="527.5" y="422.5" width="30" height="6" fill="none" stroke="#ffffff" stroke-width="1"/>
<rect x="527.5" y="428.5" width="30" height="6" fill="none" stroke="#ffffff" stroke-width="1"/>
<line x1="431.5" y1="441" x2="431.5" y2="500" stroke="#ff0000" stroke-width="1" stroke-dasharray="4 3"/>
<path transform="translate(247 483.3) scale(1)" d="M0.5 1 H9 M3.5 1 V6 M6.5 1 V6 M0.5 6 H9.5 M13 0 V7.5 M10 2.5 H13 M10 5 H13" stroke="#00ffff" stroke-width="1.3" fill="none"/>
<ellipse cx="254.8" cy="494.8" rx="5" ry="2.2" stroke="#00ffff" fill="none" stroke-width="1.2"/>
<path transform="translate(266 483.3) scale(1)" d="M0.5 1.5 H7.5 V6 H0.5 Z M13 0 V7.5 M9 2.5 H13 M9 5 H13 M2.5 9.5 V14.5 H13" stroke="#00ffff" stroke-width="1.3" fill="none"/>
<path transform="translate(285 483.3) scale(1)" d="M0.5 1 H12.5 M1 1 V6 H12.5 M7 7 V10.5 M-1 11.5 H14" stroke="#00ffff" stroke-width="1.3" fill="none"/>
<g transform="translate(252 507.5) scale(1.1379310344827587 1.1666666666666667) translate(0 -6)" fill="none" stroke="#00ffff" stroke-width="1" vector-effect="non-scaling-stroke" style="vector-effect:non-scaling-stroke"><path vector-effect="non-scaling-stroke" transform="translate(0 0)" d="M4 1 L3 0 H1 L0 1 V2 L1 3 H3 L4 4 V5 L3 6 H1 L0 5"/><path vector-effect="non-scaling-stroke" transform="translate(5.5 0)" d="M4 1 L3 0 H1 L0 1 V5 L1 6 H3 L4 5"/><path vector-effect="non-scaling-stroke" transform="translate(11.0 0)" d="M0 6 V2 L2 0 L4 2 V6 M0 3.5 H4"/><path vector-effect="non-scaling-stroke" transform="translate(16.5 0)" d="M0 0 V6 H4"/><path vector-effect="non-scaling-stroke" transform="translate(22.0 0)" d="M4 0 H0 V6 H4 M0 3 H3"/><path vector-effect="non-scaling-stroke" transform="translate(27.5 0)" d="M0.5 3 H3.5"/><path vector-effect="non-scaling-stroke" transform="translate(33.0 0)" d="M1 1 L2 0 V6 M1 6 H3"/><path vector-effect="non-scaling-stroke" transform="translate(38.0 0)" d="M0 6 L4 0"/><path vector-effect="non-scaling-stroke" transform="translate(43.5 0)" d="M1 1 L2 0 V6 M1 6 H3"/><path vector-effect="non-scaling-stroke" transform="translate(48.5 0)" d="M1 0 H3 L4 1 V5 L3 6 H1 L0 5 V1 Z"/><path vector-effect="non-scaling-stroke" transform="translate(54.0 0)" d="M1 0 H3 L4 1 V5 L3 6 H1 L0 5 V1 Z"/></g>
<line x1="211" y1="498.5" x2="322.5" y2="498.5" stroke="#00ffff" stroke-width="1"/>
<circle cx="225" cy="498.5" r="9.5" stroke="#00ffff" fill="none"/>
<line x1="225" y1="488" x2="225" y2="513" stroke="#00ffff" stroke-width="1"/>
<rect x="287.5" y="494.5" width="8" height="8" fill="#ffff00" stroke="#0000ff" stroke-width="1"/>
<rect x="614.5" y="494.5" width="8" height="8" fill="#ffff00" stroke="#0000ff" stroke-width="1"/>
<rect x="451.5" y="353.5" width="8" height="8" fill="#ffff00" stroke="#0000ff" stroke-width="1"/>
</g>
</svg>
<!-- description pane -->
<div class="a" style="left:1px;top:549px;width:180px;height:59px;background:#f0f0f0;border:1px solid #a0a0a0"></div>
<div class="t b" style="left:6px;top:552px;font-size:12.3px"><span style="display:inline-block;transform:scaleX(.99);transform-origin:0 0">Name</span></div>
<div class="t n" style="left:6px;top:567px;font-size:12.3px">Gets a name of the entity.</div>
<!-- status bar -->
<div class="a" style="left:181px;top:592px;width:578px;height:16px;background:#f0f0f0"></div>
<div class="a" style="left:181px;top:592px;width:1px;height:16px;background:#a0a0a0"></div>
<svg style="left:183px;top:594px" width="32" height="13"><g stroke="#000" stroke-width="1" fill="none">
 <path d="M1 1.5 H6 M3.5 0 V1.5 M3.5 3 C1 3 1 6.5 3.5 6.5 C6 6.5 6 3 3.5 3 M8.5 0 V12 M8.5 4.5 H10 M2 8.5 V11.5 H9"/>
 <path d="M12 1.5 H19 V5 M11 6.5 H20 M15.5 6.5 V8 M12 8.5 H19 V12"/>
 <path d="M24 2 C21.5 2 21.5 8 24 8 C26.5 8 26.5 2 24 2 M29.5 0 V12 M26.5 5 H29.5"/>
</g></svg>
<div class="t" style="left:215px;top:594px;font-size:12px"><span style="display:inline-block;transform:scaleX(.95);transform-origin:0 0">_.dwg -</span></div>
<div class="a" style="left:280px;top:594px;width:1px;height:13px;background:#c8c8c8"></div>
<div class="t n" style="left:285px;top:594px;font-size:12px">100,00%</div>
<div class="a" style="left:337px;top:594px;width:1px;height:13px;background:#c8c8c8"></div>
<div class="t" style="left:352px;top:594px;font-size:12px"><span style="display:inline-block;transform:scaleX(.915);transform-origin:0 0">1185,9375 : 10938,2819 : 0</span></div>
<div class="a" style="left:485px;top:594px;width:1px;height:13px;background:#c8c8c8"></div>
<svg style="left:745px;top:596px" width="12" height="12"><g fill="#a0a0a0"><rect x="8" y="0" width="2" height="2"/><rect x="5" y="3" width="2" height="2"/><rect x="8" y="3" width="2" height="2"/><rect x="2" y="6" width="2" height="2"/><rect x="5" y="6" width="2" height="2"/><rect x="8" y="6" width="2" height="2"/></g></svg>
<!-- window borders -->
<div class="a" style="left:0;top:0;width:1px;height:609px;background:#3892d2"></div>
<div class="a" style="left:759px;top:0;width:1px;height:609px;background:#3892d2"></div>
<div class="a" style="left:0;top:608px;width:760px;height:1px;background:#3892d2"></div>
</body></html>
